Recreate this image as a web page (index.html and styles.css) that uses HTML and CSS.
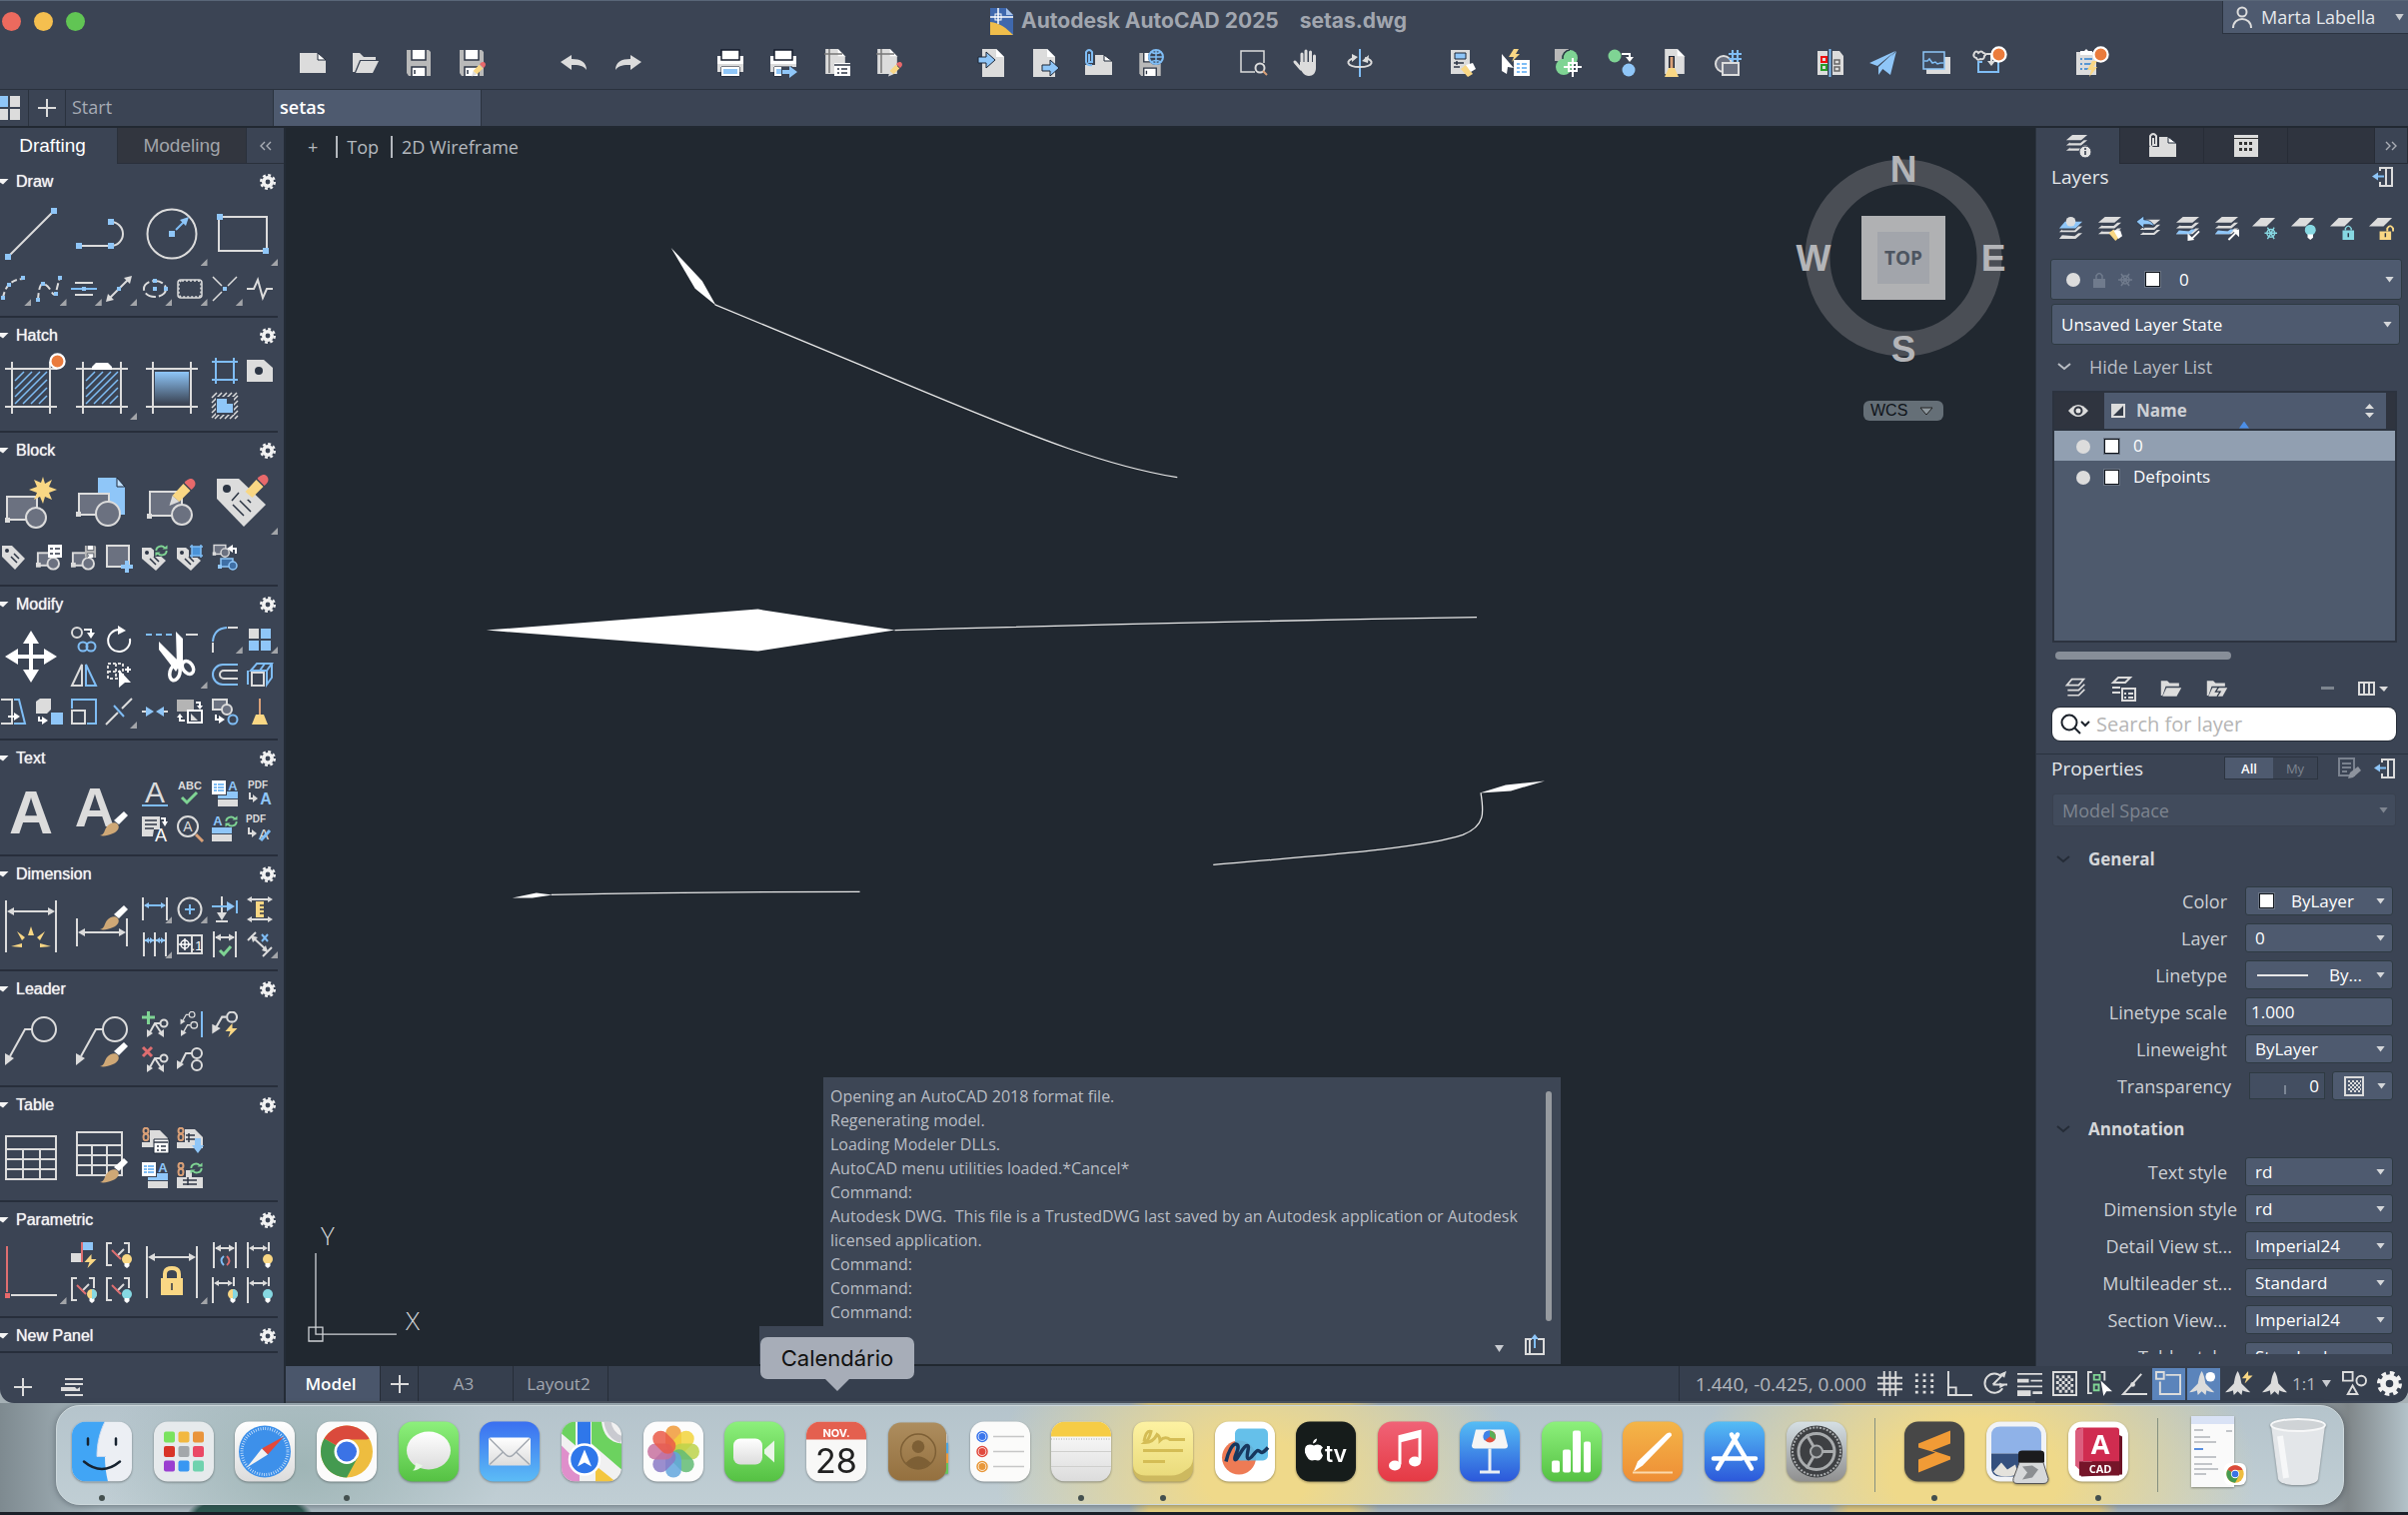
FILE: index.html
```html
<!DOCTYPE html>
<html lang="en">
<head>
<meta charset="utf-8">
<title>Autodesk AutoCAD 2025 - setas.dwg</title>
<link rel="stylesheet" href="styles.css">
</head>
<body>
<svg class="defs" aria-hidden="true">
  <defs>
    <linearGradient id="gHatch" x1="0" y1="0" x2="0" y2="1"><stop offset="0" stop-color="#8fc6f8"/><stop offset="1" stop-color="#3b4454"/></linearGradient>
    <linearGradient id="gGreen" x1="0" y1="0" x2="0" y2="1"><stop offset="0" stop-color="#8df07c"/><stop offset="1" stop-color="#55c143"/></linearGradient>
    <linearGradient id="gBlue" x1="0" y1="0" x2="0" y2="1"><stop offset="0" stop-color="#3a6ff0"/><stop offset="1" stop-color="#5cbcf6"/></linearGradient>
    <linearGradient id="gSky" x1="0" y1="0" x2="0" y2="1"><stop offset="0" stop-color="#55bdf5"/><stop offset="1" stop-color="#2c58da"/></linearGradient>
    <linearGradient id="gRed" x1="0" y1="0" x2="0" y2="1"><stop offset="0" stop-color="#f06377"/><stop offset="1" stop-color="#e53a44"/></linearGradient>
    <linearGradient id="gOrange" x1="0" y1="0" x2="0" y2="1"><stop offset="0" stop-color="#f4b548"/><stop offset="1" stop-color="#ee8e36"/></linearGradient>
    <linearGradient id="gWhite" x1="0" y1="0" x2="0" y2="1"><stop offset="0" stop-color="#fff"/><stop offset="1" stop-color="#dcdcdc"/></linearGradient>
    <linearGradient id="gGrey" x1="0" y1="0" x2="0" y2="1"><stop offset="0" stop-color="#d5dfe4"/><stop offset="1" stop-color="#8f8f8f"/></linearGradient>
    <linearGradient id="gPaper" x1="0" y1="0" x2="0" y2="1"><stop offset="0" stop-color="#fdf2a2"/><stop offset="1" stop-color="#eadb7c"/></linearGradient>
    <linearGradient id="gTan" x1="0" y1="0" x2="0" y2="1"><stop offset="0" stop-color="#ad8d5e"/><stop offset="1" stop-color="#94703f"/></linearGradient>
    <clipPath id="tile"><rect width="60" height="60" rx="14"/></clipPath>
  </defs>
  <symbol id="gear" viewBox="0 0 16 16"><circle cx="8" cy="8" r="4.2" fill="none" stroke="#f2f2f2" stroke-width="3.6"/><circle cx="8" cy="8" r="6.8" fill="none" stroke="#f2f2f2" stroke-width="2.4" stroke-dasharray="2.9 2.44"/></symbol>
  <symbol id="brush" viewBox="0 0 28 26"><path class="w" d="M14 9 24 0l4 4-9 9z"/><path class="t" d="M0 24c5-1 4-5 7-9s9-5 11-2 0 7-5 9-9 3-13 2z"/></symbol>
  <symbol id="pencil" viewBox="0 0 26 28"><path class="g" d="M0 27l3-10 7 6z"/><path class="y" d="M3 17 14 5l7 7-11 11z"/><path class="r" d="M15 4c4-5 8-5 10-2s1 6-3 9z"/></symbol>
  <symbol id="rot" viewBox="0 0 14 12"><path class="ln" d="M1.5 6a5 4.500 0 0 1 9-3M12.500 6a5 4.500 0 0 1-9 3"/><path class="n" d="M8 4.500h5.500V0zM6 7.500H.5V12z"/></symbol>
  <symbol id="spot" viewBox="0 0 18 18"><circle cx="9" cy="9" r="7.500" fill="#ea7b3c" stroke="#fff" stroke-width="2.400"/></symbol>
  <symbol id="block" viewBox="0 0 26 20"><rect x="3" y="2" width="17" height="13" class="bk"/><circle cx="19" cy="13" r="6" class="bk"/><path class="g" d="M1 12h5v5H1z"/></symbol>
  <symbol id="leader" viewBox="0 0 52 52"><circle cx="39" cy="14" r="12" class="lg"/><path class="lg" d="M27 14h-7L5 41"/><path class="g" d="M0 50V38l9 5z"/></symbol>
  <symbol id="lead-s" viewBox="0 0 18 17"><circle cx="14" cy="4" r="3.500" class="lg thin"/><path class="lg thin" d="M10 4H7L3 11"/><path class="g" d="M0 16V9l6 3z"/></symbol>
  <symbol id="bulb" viewBox="0 0 10 14"><circle cx="5" cy="5" r="5"/><path class="w" d="M2.500 9h5v3L5 14l-2.500-2z"/></symbol>
  <symbol id="link" viewBox="0 0 8 14"><ellipse cx="4" cy="3.500" rx="2.500" ry="2.800" class="lt"/><ellipse cx="4" cy="10" rx="2.500" ry="3.200" class="lt"/></symbol>
  <symbol id="dimw" viewBox="0 0 26 26"><path class="lg" d="M2 0v26M24 0v26M4 6h18"/><path class="g" d="M3 6l6-3.500v7zM23 6l-6-3.500v7z"/></symbol>
  <symbol id="cons" viewBox="0 0 26 26"><path class="lg" d="M6 1H1v22h5M18 1h5v10"/><path class="lg" d="m11 14 7-7"/><path class="lr" d="M6 8l9 9"/></symbol>
  <symbol id="layers" viewBox="0 0 26 26"><path class="g" d="M8 1h17l-7 6H1zM6 9l-5 4h17l7-6h-4l-4 3.500H5zM6 15l-5 4h17l7-6h-4l-4 3.500H5z"/></symbol>
  <symbol id="sheet" viewBox="0 0 26 26"><path class="g" d="M10 2h15l-9 9H1z"/></symbol>
  <symbol id="page" viewBox="0 0 24 28"><path class="g" d="M1 0h14l8 8v20H1z"/><path class="w" d="M15 0l8 8h-8z"/></symbol>
  <symbol id="chrome" viewBox="0 0 60 60"><circle cx="30" cy="30" r="26" fill="#eebd3f"/><path d="M30 30 7.500 17A26 26 0 0 1 52.500 17z" fill="#da4a3c"/><path d="M30 30 7.500 17A26 26 0 0 0 30 56L41 36z" fill="#449a50"/><path d="M30 18h22.500L41 36z" fill="#eebd3f"/><circle cx="30" cy="30" r="12.500" fill="#fff"/><circle cx="30" cy="30" r="10" fill="#3b73e6"/></symbol>
  <symbol id="star" viewBox="0 0 26 26"><path class="g" d="M13 0c3 5 3 9 4 13l9 9c-4 0-6-1-8-2l-1 5-4-4-4 4-1-5c-2 1-4 2-8 2l9-9c1-4 1-8 4-13z"/></symbol>
  <symbol id="bolt" viewBox="0 0 12 14"><path class="y" d="M7 0 0 8h5l-2 6 9-9H7z"/></symbol>
  <symbol id="dock-in" viewBox="0 0 22 22"><path class="lg" d="M8 5V2h12v18H8v-4M14 2v18"/><path class="lb" d="M3 10.500h9"/><path class="b" d="M0 10.500l6-4v8z"/></symbol>
  <symbol id="printer" viewBox="0 0 28 28"><path class="g" d="M1 10h26v13H1z"/><path class="w" d="M1 7h26v8H1z"/><path d="M5 1h18v10H5z" fill="#fff" stroke="#141b2b" stroke-width="1.500"/><path d="M5 18h18v9H5z" fill="#8fc6f8" stroke="#141b2b"/><path d="M6 19h16v7H6z" fill="none" stroke="#fff" stroke-width="2"/></symbol>
  <symbol id="floppy" viewBox="0 0 28 28"><path d="M2 1h22l2 2v24H4l-2-3z" fill="#b9b9b9"/><path class="w" d="M7 1h14v10H7zM7 18h14v9H7z"/><path class="lk" d="M7 1v10h14V1M7 27v-9h14v9M10 21v4"/></symbol>
</svg>

<main class="window">
  <header class="titlebar">
    <div class="lights"><span class="light red"></span><span class="light amber"></span><span class="light green"></span></div>
    <h1 class="title">
      <svg width="24" height="27" viewBox="0 0 24 27"><path d="M0 0h16l7 7v20H0z" fill="#3f68ad"/><path d="M16 0v7h7z" fill="#a9c4ea"/><path d="M0 27V14c10 1 16 6 23 13z" fill="#efbd4b"/><path d="M0 9h23M8 0v16" stroke="#fff" stroke-width="1.500"/><rect x="5" y="6" width="6" height="6" fill="none" stroke="#fff"/></svg>
      <span>Autodesk AutoCAD 2025</span><span class="file">setas.dwg</span>
    </h1>
    <button class="user"><svg width="22" height="22" viewBox="0 0 22 22"><circle cx="11" cy="6" r="4.500" class="lg"/><path class="lg" d="M2 22c0-12 18-12 18 0"/></svg><span>Marta Labella</span><i class="down"></i></button>
  </header>

  <nav class="toolbar" aria-label="Main">
    <div class="tgroup">
      <button aria-label="New"><svg viewBox="0 0 28 28"><path class="g" d="M1 4h18l8 7v13H1z"/><path d="M19 4v7h8z" fill="#fff" stroke="#1d2636"/></svg></button>
      <button aria-label="Open"><svg viewBox="0 0 28 28"><path class="g" d="M1 4h7l4 4h12v3H8L3 23H1z"/><path class="g" d="M9 12h18l-6 12H4z"/></svg></button>
      <button aria-label="Save"><svg viewBox="0 0 28 28"><use href="#floppy"/></svg></button>
      <button aria-label="Save as"><svg viewBox="0 0 28 28"><use href="#floppy"/><use href="#pencil" x="14" y="13" width="14" height="15"/></svg></button>
    </div>
    <div class="tgroup">
      <button aria-label="Undo"><svg viewBox="0 0 28 28"><path class="g" d="M0 13 11 6v4c9 0 15 3 15 11-4-5-8-5-15-5v5z"/></svg></button>
      <button aria-label="Redo"><svg viewBox="0 0 28 28"><path class="g" d="M28 13 17 6v4C8 10 2 13 2 21c4-5 8-5 15-5v5z"/></svg></button>
    </div>
    <div class="tgroup">
      <button aria-label="Print"><svg viewBox="0 0 28 28"><use href="#printer"/></svg></button>
      <button aria-label="Publish"><svg viewBox="0 0 28 28"><use href="#printer"/><path d="M12 18h16v10H12z" fill="#3b4454"/><path class="b" d="M13 21h7v-4l8 6-8 6v-4h-7z"/></svg></button>
      <button aria-label="Page setup"><svg viewBox="0 0 28 28"><use href="#page" x="2" width="22" height="25"/><path d="M7 0v24M2 5h18" stroke="#777" stroke-width="1.500"/><path class="w" d="M12 14h16v13H12z"/><path class="lk" d="M12 16h16M15 20h2M19 20h6M15 24h2M19 24h6"/></svg></button>
      <button aria-label="Page edit"><svg viewBox="0 0 28 28"><use href="#page" x="1" width="22" height="25"/><path d="M6 0v24M1 5h18" stroke="#777" stroke-width="1.500"/><use href="#pencil" x="13" y="13" width="14" height="15"/></svg></button>
    </div>
    <div class="tgroup">
      <button aria-label="Import"><svg viewBox="0 0 28 28"><use href="#page" x="3" width="24" height="28"/><path d="M0 8h8V3l9 8-9 8v-5H0z" fill="#8fc6f8" stroke="#1d2636"/></svg></button>
      <button aria-label="Export"><svg viewBox="0 0 28 28"><use href="#page" x="1" width="24" height="28"/><path d="M11 16h8v-5l9 8-9 8v-5h-8z" fill="#8fc6f8" stroke="#1d2636"/></svg></button>
      <button aria-label="Attach"><svg viewBox="0 0 28 28"><path class="g" d="M1 16h10V6h9l8 6v14H1z"/><path d="M20 6v6h8z" fill="#fff" stroke="#1d2636"/><path class="lb" d="M5 5v8h3V3Q5-1 2 3v10q1 4 6 3"/></svg></button>
      <button aria-label="Save to web"><svg viewBox="0 0 28 28"><use href="#floppy" y="3" width="26" height="25"/><circle cx="19" cy="8" r="8" fill="#3b4454"/><circle cx="19" cy="8" r="7" class="lb"/><path class="lb thin" d="M12 8h14M19 1v14M14 3q5 3 10 0M14 13q5-3 10 0"/></svg></button>
    </div>
    <div class="tgroup">
      <button aria-label="Zoom window"><svg viewBox="0 0 28 28"><path class="lg thin" d="M15 23H1V2h23v12"/><circle cx="20" cy="19" r="4.500" class="lg"/><path class="lt" d="m23 22 4 4"/></svg></button>
      <button aria-label="Pan"><svg viewBox="0 0 28 28"><path class="lg thick" stroke-linecap="round" d="M9 17V5M13 15V2M17.500 15V3M21.500 17V7M8 20 2 13"/><path class="g" d="M7 13h16v6c0 5-3 8-7 8-5 0-7-4-9-8z"/></svg></button>
      <button aria-label="Orbit"><svg viewBox="0 0 28 28"><path class="lb" d="M14 0v28"/><path class="lg" d="M9 9c-10 2-9 9 5 9s15-7 5-9"/><path class="g" d="M16 12l7-6-1 8zM12 8l-6-3v8z"/></svg></button>
    </div>
    <div class="tgroup">
      <button aria-label="Match properties"><svg viewBox="0 0 28 28"><path class="g" d="M2 1h19v24H2z"/><path d="M6 4h11v6H6z" fill="#8fc6f8" stroke="#1d2636"/><path class="lk" d="M5 14h10M5 18h6M8 12v4"/><path class="y" d="m12 20 5-4 7 9-5 3z"/><path class="w" d="m17 16 7-2 3 6-5 3z"/></svg></button>
      <button aria-label="Quick select"><svg viewBox="0 0 28 28"><path class="w" d="M0 5l12 14-6-1-1 7-5-3z"/><path class="y" d="M12 0 7 8h5l-2 5 8-8h-4l3-5z"/><path class="w" d="M12 11h16v16H12z"/><path class="lb" d="M15 15h3M20 15h5M15 19h3M20 19h5M15 23h3M20 23h5"/></svg></button>
      <button aria-label="Quick calc"><svg viewBox="0 0 28 28"><path d="M0 0h14v12H0z" fill="#b9b9b9"/><circle cx="15" cy="9" r="8" class="n"/><circle cx="9" cy="18" r="8" class="n"/><path class="lk" d="M15 1a8 8 0 0 0-7 9"/><path class="lw" d="M18 9v19M9 18h18"/><rect x="14" y="14" width="8" height="8" class="lw"/></svg></button>
      <button aria-label="Compare points"><svg viewBox="0 0 28 28"><circle cx="7" cy="7" r="6.500" class="n"/><circle cx="21" cy="21" r="6.500" class="b"/><path class="lw" d="M14 5h8v4"/><path class="w" d="M18 8h8l-4 5z"/></svg></button>
      <button aria-label="Purge"><svg viewBox="0 0 28 28"><use href="#page" x="3" width="22" height="25"/><path d="M11 7v13" stroke="#1d2636" stroke-width="6"/><path class="lt thick" d="M11 8v12"/><path class="y" d="M8 19h6l4 9H4z"/></svg></button>
      <button aria-label="Count"><svg viewBox="0 0 28 28"><circle cx="10" cy="15" r="8" class="bk"/><rect x="9" y="14" width="16" height="12" class="bk"/><path class="lb" d="M19 1v12M24 1v12M15 5h13M15 10h13"/></svg></button>
    </div>
    <div class="tgroup">
      <button aria-label="Drawing compare"><svg viewBox="0 0 28 28"><path class="g" d="M1 2h10v24H1zM16 2h7l4 5v19H16z"/><rect x="5" y="8" width="5" height="5" fill="none" stroke="#e11" stroke-width="2"/><rect x="5" y="16" width="5" height="5" fill="none" stroke="#2a9b2a" stroke-width="2"/><path d="M18 11h5v4h-5zM18 18h5v4h-5z" fill="none" stroke="#666" stroke-width="1.500"/><path class="lb" d="M13.500 0v28"/></svg></button>
      <button aria-label="Share"><svg viewBox="0 0 28 28"><path class="b" d="M0 14 26 2 8 17zM26 2 9 18v8zM27 2 12 19l9 7z"/></svg></button>
      <button aria-label="Trace"><svg viewBox="0 0 28 28"><path class="g" d="M4 8h24v17H4z"/><path d="M1 3h21v17H1z" fill="#3f4b5e" stroke="#8fc6f8" stroke-width="1.500"/><path class="lb thin" d="M2 12h3l2-2 3 4 3-1 2 2 3-1h3"/></svg></button>
      <button aria-label="Markup import"><svg viewBox="0 0 34 28"><path class="lb" d="M6 12v11h20V12h-4M6 13h4"/><path class="lg" d="M2 4q2-3 4 0 3-3 5 0 4 1 1 3 0 4-4 3-3 2-4-1-4-1-2-5zM14 5h5v8"/><path class="g" d="M15 12h8l-4 5z"/><use href="#spot" x="18" y="-3" width="17" height="17"/></svg></button>
    </div>
    <div class="tgroup">
      <button aria-label="Activity insights"><svg viewBox="0 0 34 28"><path class="g" d="M1 3h20v23H1z"/><path class="w" d="M5 2h4l2-2 2 2h4v4H5z"/><path d="M5 10h2M9 10h8M5 15h2M9 15h8M5 20h2M9 20h5" stroke="#2b7fd0" stroke-width="1.500"/><path class="y" d="m17 12-5 9h4l-2 7 8-10h-4l4-6z"/><use href="#spot" x="17" y="-3" width="17" height="17"/></svg></button>
    </div>
  </nav>

  <nav class="filetabs" aria-label="Files">
    <button class="grid" aria-label="Overview"><svg width="20" height="24" viewBox="0 0 20 24"><path class="b" d="M0 0h8v11H0z"/><path class="g" d="M10 0h10v11H10zM0 13h8v11H0zM10 13h10v11H10z"/></svg></button>
    <button class="plus" aria-label="New tab"><svg width="20" height="20" viewBox="0 0 20 20"><path class="lg" d="M10 1v18M1 10h18"/></svg></button>
    <a class="ftab" href="#start">Start</a><a class="ftab on" href="#setas">setas</a>
  </nav>

  <div class="work">
    <aside class="palette">
      <div class="ptabs"><button class="ptab on">Drafting</button><button class="ptab">Modeling</button><button class="fold" aria-label="Collapse"><svg width="12" height="10" viewBox="0 0 12 10"><path d="M5 1 1 5l4 4M11 1 7 5l4 4" fill="none" stroke="#a9adb5" stroke-width="1.400"/></svg></button></div>

      <section class="panel tall"><h2><i></i>Draw<svg class="cog"><use href="#gear"/></svg></h2>
        <div class="tools">
          <button class="big"><svg viewBox="0 0 52 52"><path class="lg" d="M3 49 49 3"/><path class="b" d="M0 46h6v6H0zM46 0h6v6h-6z"/></svg></button>
          <button class="big"><svg viewBox="0 0 52 52"><path class="lg" d="M3 38h32a12 12 0 0 0 0-24"/><path class="b" d="M0 35h6v6H0zM32 35h6v6h-6zM32 11h6v6h-6z"/></svg></button>
          <button class="big more"><svg viewBox="0 0 52 52"><circle cx="26" cy="26" r="24.500" class="lg"/><path class="lb" d="m30 22 9-9"/><path class="b" d="M23 23h6v6h-6zM43 9l-9 3 6 6z"/></svg></button>
          <button class="big more"><svg viewBox="0 0 52 52"><path class="lg" d="M2 9h48v34H2z"/><path class="b" d="M0 6h6v6H0zM46 40h6v6h-6z"/></svg></button>
          <button class="more"><svg viewBox="0 0 26 26"><path class="lg" stroke-dasharray="6 3" d="M2 22Q5 4 22 3"/><path class="b" d="M0 20h4v4H0zM6 7h4v4H6zM20 0h4v4h-4z"/></svg></button>
          <button class="more"><svg viewBox="0 0 26 26"><path class="lg" stroke-dasharray="7 3" d="M2 24Q3 8 7 8t8 7 5 2 4-16"/><path class="b" d="M0 22h4v4H0zM5 6h4v4H5zM18 16h4v4h-4zM22 0h4v4h-4z"/></svg></button>
          <button class="more"><svg viewBox="0 0 26 26"><path class="lg" d="M4 7h18M4 19h18"/><path class="lb" d="M0 13h26"/><path class="b" d="M11 11h4v4h-4z"/></svg></button>
          <button class="more"><svg viewBox="0 0 26 26"><path class="lg" d="M3 23 23 3"/><path class="g" d="M26 0l-8 2 6 6zM0 26l8-2-6-6z"/><path class="b" d="M11 11h4v4h-4z"/></svg></button>
          <button class="more"><svg viewBox="0 0 26 26"><ellipse cx="13" cy="13" rx="11" ry="8" class="lg" stroke-dasharray="11 3"/><path class="b" d="M11 3h4v4h-4zM11 11h4v4h-4zM22 11h4v4h-4z"/></svg></button>
          <button class="more"><svg viewBox="0 0 26 26"><rect x="1" y="4" width="24" height="18" rx="3" class="lg thin"/><rect x="2" y="5" width="22" height="16" rx="3" class="lg thin" stroke-dasharray="2 2"/></svg></button>
          <button class="more"><svg viewBox="0 0 26 26"><path class="lg thin" d="m1 1 9 9M25 1l-9 9M1 25l9-9"/><path class="b" d="M11 11h4v4h-4z"/></svg></button>
          <button><svg viewBox="0 0 26 26"><path class="lg" d="M0 13h7l4-9 5 18 4-9h6"/></svg></button>
        </div>
      </section>

      <section class="panel"><h2><i></i>Hatch<svg class="cog"><use href="#gear"/></svg></h2>
        <div class="tools">
          <button class="big"><svg viewBox="0 0 52 52"><path class="lg" d="M7 0v52M45 0v52M0 7h52M0 45h52"/><path class="lb thin" d="M10 19 19 10M10 27l17-17M10 35l25-25M10 42l32-32M18 42l24-24M26 42l16-16M34 42l8-8"/><use href="#spot" x="44" y="-9" width="17" height="17"/></svg></button>
          <button class="big more"><svg viewBox="0 0 52 52"><path class="lg" d="M7 0v52M45 0v52M0 7h52M0 45h52"/><path class="lb thin" d="M10 19 19 10M10 27l17-17M10 35l25-25M10 42l32-32M18 42l24-24M26 42l16-16M34 42l8-8"/><path class="w" d="M16 8v-3l4-4h12l4 4v3z"/></svg></button>
          <button class="big"><svg viewBox="0 0 52 52"><path class="lg" d="M7 0v52M45 0v52M0 7h52M0 45h52"/><path d="M9 10h34v32H9z" fill="url(#gHatch)"/></svg></button>
          <button><svg viewBox="0 0 26 26"><path class="lb" d="M4 0v26M22 0v26M0 4h26M0 22h26"/></svg></button>
          <button><svg viewBox="0 0 26 26"><path class="g" d="M0 2h17l9 8v14H0z"/><circle cx="12" cy="13" r="4" fill="#2c3544"/></svg></button>
          <button><svg viewBox="0 0 26 26"><path d="M0 5 5 0M0 10 10 0M0 15 15 0M0 20 20 0M0 25 25 0M3 26 26 3M8 26 26 8M13 26l13-13M18 26l8-8M23 26l3-3" class="lg thin"/><path d="M4 4h18v18H4z" fill="#3b4454"/><path class="b" d="M5 6h10v5h6v9H5z"/></svg></button>
        </div>
      </section>

      <section class="panel tall"><h2><i></i>Block<svg class="cog"><use href="#gear"/></svg></h2>
        <div class="tools">
          <button class="big"><svg viewBox="0 0 52 52"><rect x="2" y="20" width="30" height="23" class="bk"/><path class="g" d="M0 41h5v5H0z"/><circle cx="31" cy="41" r="10" class="bk"/><path class="y" d="m38 0 2 7 7-4-3 7 8 3-8 3 3 7-7-3-2 7-3-7-6 3 3-7-8-3 8-3-3-7 7 3z"/></svg></button>
          <button class="big"><svg viewBox="0 0 52 52"><path class="b" d="M22 1h19l8 9v28H22z"/><path d="M41 1v9h8z" fill="#bfe0ff" stroke="#1d2636"/><rect x="3" y="17" width="30" height="21" class="bk"/><path class="g" d="M0 35h5v5H0z"/><circle cx="32" cy="37" r="12" class="bk"/></svg></button>
          <button class="big"><svg viewBox="0 0 52 52"><rect x="4" y="15" width="32" height="24" class="bk"/><path class="g" d="M1 37h5v5H1z"/><circle cx="36" cy="38" r="10" class="bk"/><use href="#pencil" x="23" y="2" width="27" height="28"/></svg></button>
          <button class="big more"><svg viewBox="0 0 52 52"><path class="g" d="M0 2h22l27 26-22 22L0 22z"/><circle cx="10" cy="12" r="4" fill="#2c3544"/><path class="lk" d="M15 24l7-8M16 28l11 11M23 24l11 11M28 20l6 6"/><use href="#pencil" x="25" y="-2" width="27" height="28"/></svg></button>
          <button><svg viewBox="0 0 26 26"><path class="g" d="M1 1h10l13 13-10 11L1 12z"/><circle cx="6" cy="6" r="2" fill="#2c3544"/><path class="lk" d="M10 12l6 6M13 9l5 5"/></svg></button>
          <button><svg viewBox="0 0 26 26"><use href="#block" x="-1" y="6" width="25" height="20"/><path class="w" d="M12 0h14v13H12z"/><path class="lk" d="M14 4h3M19 4h5M14 9h3M19 9h5"/></svg></button>
          <button><svg viewBox="0 0 26 26"><use href="#block" x="-1" y="6" width="25" height="20"/><use href="#floppy" x="13" y="0" width="13" height="14"/></svg></button>
          <button><svg viewBox="0 0 26 26"><rect x="1" y="1" width="22" height="21" class="bk"/><path d="M19 16h4v4h4v4h-4v4h-4v-4h-4v-4h4z" class="b"/></svg></button>
          <button><svg viewBox="0 0 26 26"><path class="g" d="M0 3h9l15 13-10 10L0 14z"/><circle cx="5" cy="8" r="2" fill="#2c3544"/><path class="lk" d="M8 14l6 6M12 12l5 5"/><path d="M12 0h14v12H12z" fill="#3b4454"/><use href="#rot" x="13" y="0" width="13" height="12"/></svg></button>
          <button><svg viewBox="0 0 26 26"><path class="g" d="M0 3h9l15 13-10 10L0 14z"/><circle cx="5" cy="8" r="2" fill="#2c3544"/><path class="lk" d="M8 14l6 6M12 12l5 5"/><path d="M12 0h14v13H12z" fill="#3b4454"/><path d="M15 2h9v9h-9z" fill="#4a93d8"/><path class="lb thin" d="M15 0v13M24 0v13M13 2h13M13 11h13"/></svg></button>
          <button><svg viewBox="0 0 26 26"><use href="#block" x="0" y="-1" width="18" height="14"/><path class="lw" d="M24 9V4h-5"/><path class="w" d="M15 4l6-4v8z"/><rect x="9" y="14" width="12" height="8" fill="#3f6fa5" stroke="#8fc6f8" stroke-width="1.500"/><circle cx="21" cy="21" r="4" fill="#3f6fa5" stroke="#8fc6f8" stroke-width="1.500"/><path class="b" d="M6 20h4v4H6z"/></svg></button>
        </div>
      </section>

      <section class="panel tall"><h2><i></i>Modify<svg class="cog"><use href="#gear"/></svg></h2>
        <div class="tools">
          <button class="big"><svg viewBox="0 0 52 52"><path class="w" d="m26 0 8 13h-6v11h11v-6l13 8-13 8v-6H28v11h6l-8 13-8-13h6V28H13v6L0 26l13-8v6h11V13h-6z"/></svg></button>
          <button><svg viewBox="0 0 26 26"><circle cx="6" cy="6" r="5" class="lg"/><path class="lw" d="M13 3h7v5"/><path class="w" d="M16 6h8l-4 6z"/><circle cx="12" cy="20" r="4.500" class="lb"/><circle cx="20" cy="20" r="4.500" class="lb"/></svg></button>
          <button><svg viewBox="0 0 26 26"><path class="lw" d="M14 3a11 11 0 1 0 10 9"/><path class="w" d="M12-1l8 5-8 4z"/></svg></button>
          <button class="big more"><svg viewBox="0 0 52 52"><path class="lb" d="M0 4h28" stroke-dasharray="6 4"/><path class="lg" d="M40 4h12"/><path class="w" d="M30 1l7 7v28h-6zM13 11l22 22-5 8L13 19z"/><ellipse cx="29" cy="42" rx="5" ry="8" fill="none" stroke="#fff" stroke-width="3.500" transform="rotate(14 29 42)"/><ellipse cx="42" cy="37" rx="5" ry="7" fill="none" stroke="#fff" stroke-width="3.500" transform="rotate(-35 42 37)"/></svg></button>
          <button class="more"><svg viewBox="0 0 26 26"><path class="lb" d="M1 15Q2 2 15 1"/><path class="lg" d="M16 1h10M1 16v10"/></svg></button>
          <button class="more"><svg viewBox="0 0 26 26"><path class="g" d="M2 2h10v10H2z"/><path class="b" d="M14 2h10v10H14zM2 14h10v10H2zM14 14h10v10H14z"/></svg></button>
          <button><svg viewBox="0 0 26 26"><path class="lg" d="M11 3v21H1z"/><path class="lb" d="M15 3v21h10z"/></svg></button>
          <button><svg viewBox="0 0 26 26"><path class="lg" stroke-dasharray="3 2" d="M2 2h15v15H2zM2 10h15M10 2v15"/><path class="w" d="m13 8 12 13-6 0-6 5z"/><path class="lw" d="M19 8h6M22 5v6"/></svg></button>
          <button><svg viewBox="0 0 26 26"><path class="lb" d="M26 3H11a10 10 0 0 0 0 20h15"/><path class="lg" d="M26 9H12a4 4 0 0 0 0 8h14"/></svg></button>
          <button><svg viewBox="0 0 26 26"><path class="lb" d="M4 9 10 2h15L20 9zM25 2v14l-5 7V9M13 9l5-7M1 9v14"/><rect x="5" y="11" width="12" height="13" class="lg"/></svg></button>
          <button><svg viewBox="0 0 26 26"><path class="lg" d="M0 1h11v24H0"/><path class="lb" d="M13 1h5l6 24H13"/><path class="lw" d="M7 18h8"/><path class="w" d="m13 14 6 4-6 4z"/></svg></button>
          <button><svg viewBox="0 0 26 26"><path class="g" d="M0 3 4 0h11v11l-4 4H0z"/><path class="b" d="M15 14h12v12H15z"/><path class="lw" d="M3 18v4h4"/><path class="w" d="m6 18 6 4-6 4z"/></svg></button>
          <button><svg viewBox="0 0 26 26"><path class="lb" d="M1 10V1h24v24H16"/><rect x="1" y="12" width="13" height="13" class="lg"/></svg></button>
          <button class="more"><svg viewBox="0 0 26 26"><path class="lg" d="M0 26 12 14M16 10 26 0"/><path class="lb" d="m8 7 10 11"/></svg></button>
          <button><svg viewBox="0 0 26 26"><path class="lg" d="M0 13h5M21 13h5"/><path class="b" d="M4 8v10l8-5zM22 8v10l-8-5z"/></svg></button>
          <button><svg viewBox="0 0 26 26"><path d="M0 1h17v12H0z" fill="#b4b4b4"/><rect x="11" y="12" width="14" height="12" fill="#3b4454" stroke="#fff" stroke-width="2"/><path class="g" d="M14 15l7 7h-7z"/><path class="lw" d="M19 4h4v4M3 17v5h5"/><path class="w" d="M20 7h6l-3 4zM0 19h6l-3-4z"/></svg></button>
          <button><svg viewBox="0 0 26 26"><rect x="1" y="1" width="14" height="10" class="bk"/><circle cx="15" cy="11" r="5" class="bk"/><path class="lw" d="M4 16v5h4"/><path class="w" d="m7 17 6 4-6 4z"/><circle cx="21" cy="21" r="4.500" class="lb"/></svg></button>
          <button><svg viewBox="0 0 26 26"><path class="lt" d="M13 0v17"/><path class="y" d="M9 16h8l4 10H5z"/></svg></button>
        </div>
      </section>

      <section class="panel"><h2><i></i>Text<svg class="cog"><use href="#gear"/></svg></h2>
        <div class="tools">
          <button class="big"><svg viewBox="0 0 52 52"><text class="glyph" x="26" y="49" font-size="61">A</text></svg></button>
          <button class="big"><svg viewBox="0 0 52 52"><text class="glyph" x="19" y="42" font-size="56">A</text><use href="#brush" x="24" y="27" width="28" height="26"/></svg></button>
          <button><svg viewBox="0 0 26 26"><text class="glyph light" x="13" y="22" font-size="30">A</text><path class="lb" d="M0 25h26"/></svg></button>
          <button><svg viewBox="0 0 26 26"><text class="glyph" x="13" y="9" font-size="11">ABC</text><path class="ln thick" d="m5 17 5 5L20 12"/></svg></button>
          <button><svg viewBox="0 0 26 26"><path class="w" d="M0 0h14v14H0z"/><path class="lb" d="M2 4h3M6 4h6M2 7h3M6 7h6M2 10h3M6 10h6"/><text class="glyph blue" x="21" y="10" font-size="13">A</text><path class="b" d="M15 11h11v7H6v-3h9z"/><path class="g" d="M6 19h20v7H6z"/></svg></button>
          <button><svg viewBox="0 0 26 26"><text class="glyph" x="11" y="8" font-size="10">PDF</text><path class="lg" d="M3 12v6h4"/><path class="g" d="m6 14 5 4-5 4z"/><text class="glyph blue" x="19" y="24" font-size="16">A</text></svg></button>
          <button><svg viewBox="0 0 26 26"><path class="g" d="M0 1h18v20H0z"/><path class="lk" d="M3 5h12M3 9h12M3 13h9"/><path class="lw" d="M19 3h4v5"/><path class="w" d="M20 6h6l-3 5z"/><path d="M12 14h14v13H10z" fill="#3b4454"/><text class="glyph white" x="19" y="26" font-size="18">A</text></svg></button>
          <button><svg viewBox="0 0 26 26"><circle cx="11" cy="11" r="10" class="lg"/><text class="glyph light" x="11" y="16" font-size="14">A</text><path class="lt thick" d="m19 19 7 7"/></svg></button>
          <button><svg viewBox="0 0 26 26"><text class="glyph blue" x="6" y="10" font-size="13">A</text><use href="#rot" x="13" y="0" width="13" height="12"/><path class="b" d="M0 12h20v6H0z"/><path class="g" d="M0 19h20v7H0z"/></svg></button>
          <button><svg viewBox="0 0 26 26"><text class="glyph" x="9" y="7" font-size="10">PDF</text><path class="lg" d="M2 12v6h4"/><path class="g" d="m5 14 5 4-5 4z"/><text class="glyph light" x="17" y="24" font-size="15">A</text><path class="lb thick" d="m14 25 9-10"/></svg></button>
        </div>
      </section>

      <section class="panel"><h2><i></i>Dimension<svg class="cog"><use href="#gear"/></svg></h2>
        <div class="tools">
          <button class="big"><svg viewBox="0 0 52 52"><path class="lg" d="M1 0v52M51 0v52M4 11h44"/><path class="g" d="m2 11 7-4v8zM50 11l-7-4v8z"/><path class="y" d="m26 26 3 9h-6zM12 31l8 6-3 3zM40 31l-8 6 3 3zM6 46l11-3v4zM46 46l-11-3v4z"/></svg></button>
          <button class="big"><svg viewBox="0 0 52 52"><path class="lg" d="M1 18v28M51 18v28M4 32h44"/><path class="g" d="m2 32 7-4v8zM50 32l-7-4v8z"/><use href="#brush" x="24" y="5" width="28" height="26"/></svg></button>
          <button class="more"><svg viewBox="0 0 26 26"><path class="lg" d="M1 1v23M25 1v23"/><path class="lb" d="M3 9h20"/><path class="b" d="m2 9 5-3v6zM24 9l-5-3v6z"/></svg></button>
          <button class="more"><svg viewBox="0 0 26 26"><circle cx="13" cy="13" r="11.500" class="lg"/><path class="lb" d="M8 13h10M13 8v10"/></svg></button>
          <button><svg viewBox="0 0 26 26"><path class="lg" d="M10 0v18M4 25h12"/><path class="g" d="M5 16h10l-5 8z"/><path class="lb" d="M0 10h16M25 4v13"/><path class="b" d="m15 5 8 5-8 5z"/></svg></button>
          <button><svg viewBox="0 0 26 26"><path class="lg" d="M3 3h20M3 23h20"/><path class="g" d="m0 3 5-3v6zM26 3l-5-3v6zM0 23l5-3v6zM26 23l-5-3v6z"/><path class="y" d="M9 5h8v16H9z"/><path class="lk" d="M13 9h4M13 13h4M13 17h4"/></svg></button>
          <button class="more"><svg viewBox="0 0 26 26"><path class="lg" d="M2 1v24M13 1v24M24 1v24"/><path class="lb" d="M3 9h9M14 9h9"/><path class="b" d="m3 9 4-3v6zM12 9 8 6v6zM14 9l4-3v6zM23 9l-4-3v6z"/></svg></button>
          <button><svg viewBox="0 0 26 26"><path class="lg" d="M1 4h24v18H1zM15 4v18"/><circle cx="8" cy="13" r="4" class="lw thin"/><path class="lw thin" d="M2 13h12M8 7v12"/><text class="glyph white" x="20" y="19" font-size="13">.1</text></svg></button>
          <button><svg viewBox="0 0 26 26"><use href="#dimw" width="26" height="26"/><path class="ln thick" d="m8 19 4 4 7-8"/></svg></button>
          <button class="more"><svg viewBox="0 0 26 26"><path class="lg" d="m1 9 8-8M16 25l9-9M6 6l14 13"/><path class="g" d="m4 4 7 2-5 5zM21 21l-6-2 4-5z"/><path class="lb" d="m15 3 6 7M21 3l-6 7"/></svg></button>
        </div>
      </section>

      <section class="panel"><h2><i></i>Leader<svg class="cog"><use href="#gear"/></svg></h2>
        <div class="tools">
          <button class="big"><svg viewBox="0 0 52 52"><use href="#leader"/></svg></button>
          <button class="big"><svg viewBox="0 0 52 52"><use href="#leader"/><use href="#brush" x="24" y="27" width="28" height="26"/></svg></button>
          <button><svg viewBox="0 0 26 26"><path class="ln thick" d="M0 6h13M6.500 0v13"/><circle cx="22" cy="12" r="3.500" class="lg"/><path class="lg" d="M18 12h-5l-5 9M13 12l6 9"/><path class="g" d="M5 26v-8l6 4zM22 26v-8l-6 4z"/></svg></button>
          <button><svg viewBox="0 0 26 26"><path class="lb" d="M25 0v26"/><use href="#lead-s" x="0" y="0" width="22" height="14"/><use href="#lead-s" x="3" y="10" width="19" height="16"/></svg></button>
          <button><svg viewBox="0 0 26 26"><use href="#lead-s" width="26" height="24" y="0"/><use href="#bolt" x="13" y="12" width="13" height="14"/></svg></button>
          <span></span>
          <button><svg viewBox="0 0 26 26"><path class="lr thick" d="m1 1 9 9M10 1l-9 9"/><circle cx="22" cy="12" r="3.500" class="lg"/><path class="lg" d="M18 12h-5l-5 9M13 12l6 9"/><path class="g" d="M5 26v-8l6 4zM22 26v-8l-6 4z"/></svg></button>
          <button><svg viewBox="0 0 26 26"><circle cx="20" cy="7" r="5" class="lg"/><circle cx="20" cy="19" r="5" class="lg"/><path class="lg" d="M15 7h-6L3 19"/><path class="g" d="M0 23v-9l7 4z"/></svg></button>
        </div>
      </section>

      <section class="panel"><h2><i></i>Table<svg class="cog"><use href="#gear"/></svg></h2>
        <div class="tools">
          <button class="big"><svg viewBox="0 0 52 52"><path class="lg" d="M1 5h50v43H1zM1 18h50M1 28h50M1 38h50M18 18v30M35 18v30"/></svg></button>
          <button class="big"><svg viewBox="0 0 52 52"><path class="lg" d="M1 1h45v43H1zM1 14h45M1 24h45M1 34h45M16 14v30M31 14v30"/><use href="#brush" x="24" y="27" width="28" height="26"/></svg></button>
          <button><svg viewBox="0 0 26 26"><path class="g" d="M8 3h10l8 8v9H0v-5h8z"/><use href="#link" x="0" y="0" width="8" height="14"/><path d="M12 12h15v14H12z" fill="#fff" stroke="#1d2636"/><path class="lk" d="M12 15h14M15 19h2M19 19h5M15 23h2M19 23h5"/></svg></button>
          <button><svg viewBox="0 0 26 26"><path class="g" d="M8 2h10l8 8v11H0v-6h8z"/><path class="lk" d="M9 8h9M9 12h9M12 6v9"/><use href="#link" x="0" y="0" width="8" height="14"/><path class="b" d="M18 11h6v7h3l-6 8-6-8h3z"/></svg></button>
          <span></span><span></span>
          <button><svg viewBox="0 0 26 26"><path class="w" d="M0 0h14v14H0z"/><path class="lb" d="M2 4h3M6 4h6M2 7h3M6 7h6M2 10h3M6 10h6"/><text class="glyph blue" x="21" y="10" font-size="13">A</text><path class="b" d="M15 11h11v7H6v-3h9z"/><path class="g" d="M6 19h20v7H6z"/></svg></button>
          <button><svg viewBox="0 0 26 26"><path class="g" d="M0 15h26v11H0zM9 8h6v7H9z"/><path class="lk" d="M6 18h14M6 22h14M11 15v8"/><use href="#link" x="0" y="0" width="8" height="14"/><use href="#rot" x="13" y="0" width="13" height="12"/></svg></button>
        </div>
      </section>

      <section class="panel"><h2><i></i>Parametric<svg class="cog"><use href="#gear"/></svg></h2>
        <div class="tools">
          <button class="big more"><svg viewBox="0 0 52 52"><path class="lr" d="M2 0v46"/><path class="lg" d="M6 49h46"/><path class="r" d="M0 47h5v5H0z"/></svg></button>
          <button><svg viewBox="0 0 26 26"><path class="b" d="M11 0h11v8H11z"/><path class="g" d="M0 11h10v9H0z"/><path class="lr" d="M11 0v20"/><use href="#bolt" x="13" y="12" width="13" height="14"/></svg></button>
          <button><svg viewBox="0 0 26 26"><use href="#cons"/><use href="#bulb" class="y" x="16" y="12" width="10" height="14"/></svg></button>
          <button class="big more"><svg viewBox="0 0 52 52"><path class="lg" d="M1 0v52M51 0v52M4 11h44"/><path class="g" d="m2 11 7-4v8zM50 11l-7-4v8z"/><path class="y" d="M15 32h22v17H15z"/><path d="M19 32v-4q0-6 7-6t7 6v4" fill="none" stroke="#f9d784" stroke-width="4"/><path class="lk" d="M26 37v7"/></svg></button>
          <button><svg viewBox="0 0 26 26"><use href="#dimw"/><path d="M12 14q-5 4 0 9" class="lb"/><path class="lr" d="M15 23q5-4 0-9"/></svg></button>
          <button><svg viewBox="0 0 26 26"><path class="lg" d="M1 0v26M22 0v9M4 6h15"/><path class="g" d="m2 6 5-3v6zM21 6l-5-3v6z"/><use href="#bulb" class="y" x="16" y="12" width="10" height="14"/></svg></button>
          <button><svg viewBox="0 0 26 26"><use href="#cons"/><use href="#bulb" class="y" x="16" y="12" width="10" height="14"/><path class="c" d="M21 12a5 5 0 0 1 0 10z"/></svg></button>
          <button><svg viewBox="0 0 26 26"><use href="#cons"/><use href="#bulb" class="c" x="16" y="12" width="10" height="14"/></svg></button>
          <button><svg viewBox="0 0 26 26"><path class="lg" d="M1 0v26M22 0v9M4 6h15"/><path class="g" d="m2 6 5-3v6zM21 6l-5-3v6z"/><use href="#bulb" class="y" x="16" y="12" width="10" height="14"/><path class="c" d="M21 12a5 5 0 0 1 0 10z"/></svg></button>
          <button><svg viewBox="0 0 26 26"><path class="lg" d="M1 0v26M22 0v9M4 6h15"/><path class="g" d="m2 6 5-3v6zM21 6l-5-3v6z"/><use href="#bulb" class="c" x="16" y="12" width="10" height="14"/></svg></button>
        </div>
      </section>

      <section class="panel short"><h2><i></i>New Panel<svg class="cog"><use href="#gear"/></svg></h2></section>
      <div class="pfoot">
        <button aria-label="Add panel"><svg width="20" height="20" viewBox="0 0 20 20"><path class="lg" d="M10 1v18M1 10h18"/></svg></button>
        <button aria-label="Panel list"><svg width="22" height="20" viewBox="0 0 22 20"><path class="lg" d="M4 2h18M4 7h18M4 18h18"/><path class="g" d="M0 10h14l2 2 3-2v4H0z"/></svg></button>
      </div>
    </aside>

    <div class="center">
      <div class="canvas">
        <div class="viewlabel"><button>+</button><button>Top</button><button>2D Wireframe</button></div>
        <svg class="drawing" viewBox="286 127 1752 1240" preserveAspectRatio="xMinYMin meet">
          <g fill="none" stroke="#e8e8e8" stroke-width="1.300">
            <path d="M716 304 861 364Q1010 427 1070 448T1179 477"/>
            <path d="M896 630Q1180 622 1479 617"/>
            <path d="M1483 793C1486 812 1488 826 1465 835C1420 850 1300 857 1215 865"/>
            <path d="M552 895Q700 892 861 892"/>
          </g>
          <g fill="#fff"><path d="m672 247 31 33 14 25-21-17z"/><path d="m487 630 272-21 137 21-137 21z"/><path d="m1482 793 26-8 39-4-34 10z"/><path d="m513 898 24-5 16 2-20 3z"/></g>
          <g fill="none" stroke="#cfd2d6" stroke-width="1.300"><path d="M316 1254v81h81M309 1328h14v14h-14z"/></g>
          <text class="axis" x="328" y="1246">Y</text><text class="axis" x="413" y="1331">X</text>
        </svg>
        <div class="cube">
          <svg width="220" height="220" viewBox="0 0 220 220"><circle cx="110" cy="110" r="86" fill="none" stroke="#4a4e55" stroke-width="25"/><rect x="68" y="68" width="84" height="84" fill="#b0b1b3"/><rect x="84" y="84" width="52" height="52" fill="#a2a5ab"/>
            <text class="face" x="110" y="117">TOP</text><text class="wind" x="110" y="34">N</text><text class="wind" x="110" y="214">S</text><text class="wind" x="20" y="123">W</text><text class="wind" x="200" y="123">E</text></svg>
          <button class="wcs">WCS <svg width="14" height="9" viewBox="0 0 14 9"><path d="M1 1h12L7 8z" fill="#8f999f" stroke="#222"/></svg></button>
        </div>
        <div class="command">
          <div class="log">Opening an AutoCAD 2018 format file.
Regenerating model.
Loading Modeler DLLs.
AutoCAD menu utilities loaded.*Cancel*
Command:
Autodesk DWG.  This file is a TrustedDWG last saved by an Autodesk application or Autodesk licensed application.
Command:
Command:
Command:</div>
          <span class="vbar"></span>
          <div class="prompt"><input aria-label="Command" value=""><button aria-label="History"><i class="down"></i></button><button aria-label="Undock"><svg width="22" height="22" viewBox="0 0 22 22"><path class="lg" d="M8 5H2v15h18V5h-6M6 5v15"/><path class="lb" d="M11 4v10"/><path class="b" d="m11 0 4 5H7z"/></svg></button></div>
        </div>
      </div>
      <div class="statusbar">
        <a class="ltab on" href="#model">Model</a><button class="ladd" aria-label="New layout"><svg width="20" height="20" viewBox="0 0 20 20"><path class="lg" d="M10 1v18M1 10h18"/></svg></button><a class="ltab" href="#a3">A3</a><a class="ltab" href="#layout2">Layout2</a>
      </div>
    </div>

    <aside class="inspector">
      <div class="itabs">
        <button class="itab on" aria-label="Layers"><svg width="26" height="24" viewBox="0 0 26 24"><use href="#layers" width="23" height="23"/><circle cx="20" cy="18" r="6" fill="#e4e4e4" stroke="#3b4454"/><path class="lk" d="M20 17v4M20 14v2"/></svg></button>
        <button class="itab" aria-label="References"><svg width="28" height="26" viewBox="0 0 28 26"><path class="g" d="M1 14h10V4h9l8 6v14H1z"/><path d="M20 4v6h8z" fill="#fff" stroke="#1d2636"/><path class="lg" d="M5 5v7h3V3Q5-1 2 3v9q1 4 6 3"/></svg></button>
        <button class="itab" aria-label="Content"><svg width="24" height="24" viewBox="0 0 24 24"><path class="g" d="M0 1h24v22H0z"/><path d="M5 8h3v3H5zM10 8h3v3h-3zM15 8h3v3h-3zM5 14h3v3H5zM10 14h3v3h-3zM15 14h3v3h-3zM0 4h24v1H0z" fill="#333"/></svg></button>
        <span class="ifill"></span>
        <button class="iend" aria-label="Collapse"><svg width="12" height="10" viewBox="0 0 12 10"><path d="m1 1 4 4-4 4M7 1l4 4-4 4" fill="none" stroke="#a9adb5" stroke-width="1.400"/></svg></button>
      </div>
      <div class="ihead"><h2>Layers</h2><button aria-label="Undock"><svg width="22" height="22"><use href="#dock-in"/></svg></button></div>
      <div class="ltools">
        <button><svg viewBox="0 0 26 26"><path class="b" d="M7 6h18l-7 7H1z"/><circle cx="13" cy="6" r="5" class="g"/><path class="g" d="M4 14l-3 3h17l7-6h-4l-4 4H4zM4 20l-3 4h17l7-6h-4l-4 3z"/></svg></button>
        <button><svg viewBox="0 0 26 26"><use href="#layers"/><path class="y" d="m12 18 5-4 6 8-4 4z"/><path class="w" d="m17 15 7 0 2 6-4 3z"/></svg></button>
        <button><svg viewBox="0 0 26 26"><use href="#layers" x="3" y="3" width="23" height="23"/><path d="M0 6l8-6v4q8 0 11 7-5-3-11-2v4z" fill="#8fc6f8" stroke="#1d2636" stroke-width=".7"/></svg></button>
        <button><svg viewBox="0 0 26 26"><use href="#layers"/><path class="b" d="M4 15l-3 4h15l5-5h-4l-3 2z"/><path class="lw" d="m25 16-8 8"/><path class="w" d="M13 26v-8l7 7z"/></svg></button>
        <button><svg viewBox="0 0 26 26"><use href="#layers"/><path class="b" d="M4 15l-3 4h15l5-5h-4l-3 2z"/><path class="lw" d="m15 25 8-8"/><path class="w" d="M26 14v8l-7-7z"/></svg></button>
        <button><svg viewBox="0 0 26 26"><use href="#sheet" x="-1"/><path class="lc" d="M13 18h13M16 12l7 12M23 12l-7 12"/><circle cx="19.500" cy="18" r="4" class="lc"/></svg></button>
        <button><svg viewBox="0 0 26 26"><use href="#sheet" x="-1"/><use href="#bulb" class="c" x="14" y="9" width="12" height="16"/></svg></button>
        <button><svg viewBox="0 0 26 26"><use href="#sheet" x="-1"/><path class="c" d="M13 15h12v10H13z"/><path class="lc" d="M16 15v-2q3-5 6 0v2"/><path class="lk" d="M19 18v4"/></svg></button>
        <button><svg viewBox="0 0 26 26"><use href="#sheet" x="-1"/><path class="y" d="M11 16h12v9H11z"/><path d="M19 16v-3q3-5 6 0v3" fill="none" stroke="#f9d784" stroke-width="2"/><path class="lk" d="M17 18v4"/></svg></button>
      </div>
      <div class="sel layer-current"><span class="dot"></span>
        <svg width="12" height="16" viewBox="0 0 12 16"><path d="M0 7h12v9H0z" fill="#707b8d"/><path d="M3 7V4q3-5 6 0v3" fill="none" stroke="#707b8d" stroke-width="1.500"/></svg>
        <svg width="14" height="14" viewBox="0 0 14 14"><path d="M0 7h14M3 1l8 12M11 1 3 13" stroke="#707b8d" stroke-width="1.500"/><circle cx="7" cy="7" r="4" fill="none" stroke="#707b8d" stroke-width="1.500"/></svg>
        <span class="swatch"></span><select aria-label="Current layer"><option>0</option></select></div>
      <div class="sel layer-state"><select aria-label="Layer state"><option>Unsaved Layer State</option></select></div>
      <button class="disclose"><svg width="14" height="8" viewBox="0 0 14 8"><path d="m1 1 6 5 6-5" fill="none" stroke="#b9bdc4" stroke-width="2"/></svg>Hide Layer List</button>
      <div class="layerlist">
        <table>
          <thead><tr><th class="vis"><svg width="20" height="12" viewBox="0 0 20 12"><path class="g" d="M0 6q10-12 20 0-10 12-20 0z"/><circle cx="10" cy="6" r="3.500" fill="#e4e4e4" stroke="#2f343f" stroke-width="2"/></svg></th>
            <th class="name"><div><svg width="14" height="14" viewBox="0 0 14 14"><path class="g" d="M0 0h14v14H0z"/><path d="M12 2v10H2z" fill="#333b48"/></svg>Name<svg class="sort" width="9" height="14" viewBox="0 0 9 14"><path class="g" d="M4.500 0 9 5H0zM4.500 14 0 9h9z"/></svg></div></th><th class="rest"></th></tr></thead>
          <tbody><tr class="on"><td class="vis"><span class="dot"></span></td><td colspan="2"><span class="swatch"></span>0</td></tr>
            <tr><td class="vis"><span class="dot"></span></td><td colspan="2"><span class="swatch"></span>Defpoints</td></tr></tbody>
        </table>
      </div>
      <div class="hscroll"><span></span></div>
      <div class="lfoot">
        <button aria-label="New layer"><svg width="22" height="22" viewBox="0 0 26 26"><path class="lg" d="M9 2h14l-6 7H3z"/><path class="lg" d="M4 15h13l7-7M4 21h13l7-7"/></svg></button>
        <button aria-label="Layer settings"><svg width="26" height="26" viewBox="0 0 26 26"><path class="lg" d="M8 2h12l-5 5H3zM2 12h8M2 17h8"/><path class="lg" d="M12 13h13v12H12zM14 18h2M18 18h5M14 22h2M18 22h5"/></svg></button>
        <button aria-label="Group"><svg width="22" height="20" viewBox="0 0 28 22"><path class="g" d="M1 1h8l3 3h12v4H7L3 20H1z"/><path class="g" d="M8 10h19l-6 11H3z"/></svg></button>
        <button aria-label="Dynamic group"><svg width="22" height="20" viewBox="0 0 28 22"><path class="g" d="M1 1h8l3 3h12v4H7L3 20H1z"/><path class="g" d="M8 10h19l-6 11H3z"/><path class="lk" d="m16 9-4 6h6l-4 6"/></svg></button>
        <button class="del" aria-label="Delete"></button>
        <button aria-label="Columns"><svg width="30" height="14" viewBox="0 0 30 14"><path class="lg" d="M1 1h15v12H1zM6 1v12M11 1v12"/><path class="g" d="M21 5h9l-4 5z"/></svg></button>
      </div>
      <label class="search"><svg width="30" height="22" viewBox="0 0 30 22"><circle cx="9" cy="9" r="7.500" fill="none" stroke="#1c222b" stroke-width="2"/><path d="m14 14 6 6M21 8l4 4 4-4" fill="none" stroke="#1c222b" stroke-width="2"/></svg><input type="text" placeholder="Search for layer" aria-label="Search for layer"></label>

      <section class="props">
        <div class="phead"><h2>Properties</h2><div class="seg"><button class="on">All</button><button>My</button></div>
          <button aria-label="Edit"><svg width="22" height="22" viewBox="0 0 22 22"><path d="M1 1h15v17H1z" fill="none" stroke="#7a828f" stroke-width="2"/><path d="M4 6h9M4 10h9M4 14h5" stroke="#7a828f" stroke-width="2"/><path d="m10 21 2-6 8-6 3 4-8 7z" fill="#8d939d"/></svg></button>
          <button aria-label="Undock"><svg width="22" height="22"><use href="#dock-in"/></svg></button></div>
        <div class="sel space"><select aria-label="Object type" disabled><option>Model Space</option></select></div>
        <h3><svg width="14" height="8" viewBox="0 0 14 8"><path d="m1 1 6 5 6-5" fill="none" stroke="#252c37" stroke-width="2"/></svg>General</h3>
        <div class="row"><label for="p1">Color</label><div class="sel"><span class="swatch"></span><select id="p1"><option>ByLayer</option></select></div></div>
        <div class="row"><label for="p2">Layer</label><div class="sel"><select id="p2"><option>0</option></select></div></div>
        <div class="row"><label for="p3">Linetype</label><div class="sel"><span class="ltype"></span><select id="p3"><option>By...</option></select></div></div>
        <div class="row"><label for="p4">Linetype scale</label><input id="p4" class="field" value="1.000"></div>
        <div class="row"><label for="p5">Lineweight</label><div class="sel"><select id="p5"><option>ByLayer</option></select></div></div>
        <div class="row"><label for="p6">Transparency</label><input id="p6" class="field amount" value="0"><button class="sel check" aria-label="Transparency mode"><svg width="20" height="20" viewBox="0 0 20 20"><path class="lg" d="M1 1h18v18H1z"/><path class="lg" stroke-dasharray="2 2" d="M4 5h13M6 7h11M4 9h13M6 11h11M4 13h13M6 15h11"/></svg></button></div>
        <h3><svg width="14" height="8" viewBox="0 0 14 8"><path d="m1 1 6 5 6-5" fill="none" stroke="#252c37" stroke-width="2"/></svg>Annotation</h3>
        <div class="row"><label for="a1">Text style</label><div class="sel"><select id="a1"><option>rd</option></select></div></div>
        <div class="row wide"><label for="a2">Dimension style</label><div class="sel"><select id="a2"><option>rd</option></select></div></div>
        <div class="row mid"><label for="a3">Detail View st...</label><div class="sel"><select id="a3"><option>Imperial24</option></select></div></div>
        <div class="row mid"><label for="a4">Multileader st...</label><div class="sel"><select id="a4"><option>Standard</option></select></div></div>
        <div class="row"><label for="a5">Section View...</label><div class="sel"><select id="a5"><option>Imperial24</option></select></div></div>
        <div class="row"><label for="a6">Table style</label><div class="sel"><select id="a6"><option>Standard</option></select></div></div>
      </section>
    </aside>

    <div class="modes">
      <span class="coords">1.440, -0.425, 0.000</span>
      <button><svg viewBox="0 0 26 26"><path class="lg" d="M7 0v26M13 0v26M19 0v26M0 7h26M0 13h26M0 19h26"/></svg></button>
      <button><svg viewBox="0 0 26 26"><path class="lg thick" stroke-dasharray="3 5" d="M3 4h22M3 10h22M3 16h22M3 22h22"/></svg></button>
      <button><svg viewBox="0 0 26 26"><path class="lg" d="M1 0v25h25M1 17h8v8"/></svg></button>
      <button><svg viewBox="0 0 26 26"><path class="lg" d="M20 6a10 10 0 1 0 1 12M11 14h15M11 14 23 2"/><path class="g" d="m18 12 5 3-5 3zM25 0l-7 3 5 4z"/></svg></button>
      <button><svg viewBox="0 0 26 26"><path class="g" d="M0 2h26v2H0zM0 8h12v4H0zM14 9h12v2H14zM0 15h26v2H0zM0 20h14v6H0zM16 21h10v3H16z"/></svg></button>
      <button><svg viewBox="0 0 26 26"><path class="lg" d="M1 1h24v24H1z"/><path class="lg thick" stroke-dasharray="3 3" d="M4 6h18M7 9h16M4 12h18M7 15h16M4 18h18M7 21h16"/></svg></button>
      <button><svg viewBox="0 0 26 26"><path class="lg" d="M5 1H1v22h4M14 1h4v9"/><path class="ln" d="M7 4h6v5H7zM7 14h5v6H7z"/><path class="w" d="m14 10 12 11-6 0-3 5z"/></svg></button>
      <button><svg viewBox="0 0 26 26"><path class="lg" d="M26 24H1L20 3"/><circle cx="11" cy="14" r="2.500" class="g"/></svg></button>
      <button class="hot"><svg viewBox="0 0 26 26"><path class="lg" d="M10 4h15v20H4V11"/><path class="lg" d="M0 1h8v7H0z"/></svg></button>
      <button class="hot"><svg viewBox="0 0 26 26"><use href="#star" x="-2"/><circle cx="20" cy="6" r="5" class="w"/></svg></button>
      <button><svg viewBox="0 0 26 26"><use href="#star" x="-2"/><use href="#bolt" x="15" y="0" width="12" height="13"/></svg></button>
      <button><svg viewBox="0 0 26 26"><use href="#star"/></svg></button>
      <button class="scale">1:1<i class="down"></i></button>
      <button><svg viewBox="0 0 26 26"><path class="lg" d="M1 1h10v9H1z"/><circle cx="20" cy="10" r="5" class="lg"/><path class="lg" d="m11 15 5 9H6z"/></svg></button>
      <button><svg viewBox="0 0 26 26"><use href="#gear"/></svg></button>
    </div>
  </div>
</main>

<footer class="desktop">
  <nav class="dock" aria-label="Dock">
    <div class="dgroup g22">
      <a href="#" class="run"><svg viewBox="0 0 60 60"><g clip-path="url(#tile)"><path d="M0 0h60v60H0z" fill="#eceff4"/><path d="M33 0C27 12 25 24 25 35h8c0 9 1 17 3 25H0V0z" fill="#41a5f5"/><path d="M33 0c-6 12-8 24-8 35h9" fill="none" stroke="#c9d8ee"/></g><path d="M16 17v6M44 17v6M12 40q18 15 36 0" fill="none" stroke="#16222f" stroke-width="2.500" stroke-linecap="round"/></svg></a>
      <a href="#"><svg viewBox="0 0 60 60"><rect width="60" height="60" rx="14" fill="#e6eaec"/><rect x="10" y="10" width="11" height="11" rx="2" fill="#7ae35f"/><rect x="24.500" y="10" width="11" height="11" rx="2" fill="#f2b840"/><rect x="39" y="10" width="11" height="11" rx="2" fill="#e9943c"/><rect x="10" y="24.500" width="11" height="11" rx="2" fill="#d83427"/><rect x="24.500" y="24.500" width="11" height="11" rx="2" fill="#a3a7aa"/><rect x="39" y="24.500" width="11" height="11" rx="2" fill="#ea4966"/><rect x="10" y="39" width="11" height="11" rx="2" fill="#9a3fd0"/><rect x="24.500" y="39" width="11" height="11" rx="2" fill="#3997f2"/><rect x="39" y="39" width="11" height="11" rx="2" fill="#6fd2ae"/></svg></a>
      <a href="#"><svg viewBox="0 0 60 60"><rect width="60" height="60" rx="14" fill="url(#gWhite)"/><circle cx="30" cy="30" r="26" fill="#3d90ea"/><circle cx="30" cy="30" r="23" fill="none" stroke="#cfe4fa" stroke-width="3" stroke-dasharray=".8 1.600"/><path d="M49 15 33 33l-6-6z" fill="#e4493a"/><path d="m12 46 15-19 6 6z" fill="#f2f2f2"/></svg></a>
      <a href="#" class="run"><svg viewBox="0 0 60 60"><rect width="60" height="60" rx="14" fill="#fbfbfb"/><use href="#chrome"/></svg></a>
      <a href="#"><svg viewBox="0 0 60 60"><rect width="60" height="60" rx="14" fill="url(#gGreen)"/><ellipse cx="30" cy="29" rx="22" ry="19" fill="url(#gWhite)"/><path d="M17 41q0 6-3 8 6 0 10-5z" fill="#e8f5e6"/></svg></a>
      <a href="#"><svg viewBox="0 0 60 60"><rect width="60" height="60" rx="14" fill="url(#gBlue)"/><rect x="9" y="16" width="42" height="28" rx="2" fill="url(#gWhite)"/><path d="m10 17 16 16q4 4 8 0l16-16M10 43l14-13M50 43 36 30" fill="none" stroke="#a2a8b0" stroke-width="1.500"/></svg></a>
      <a href="#"><svg viewBox="0 0 60 60"><g clip-path="url(#tile)"><path d="M0 0h60v60H0z" fill="#f1f1f1"/><path d="M0 0h14v24L0 12zM30 0h10q2 20 20 22v26L30 22z" fill="#6cd25f"/><path d="M46 0q2 14 14 18" fill="none" stroke="#c9cad0" stroke-width="7"/><path d="M0 24 18 42v18H0z" fill="#df8fcb"/><path d="M34 60V44l20 16z" fill="#f3c63f"/><path d="M16 0h13v26H16z" fill="#2f77ea"/></g><circle cx="23" cy="38" r="15" fill="#2f77ea" stroke="#fff" stroke-width="2.500"/><path d="m23 28 7 17-7-4-7 4z" fill="#fff"/></svg></a>
      <a href="#"><svg viewBox="0 0 60 60"><rect width="60" height="60" rx="14" fill="#fcfcfc"/><g fill-opacity=".85"><rect x="22" y="4" width="16" height="26" rx="8" fill="#f09a38"/><rect x="22" y="4" width="16" height="26" rx="8" fill="#f2d33c" transform="rotate(45 30 30)"/><rect x="22" y="4" width="16" height="26" rx="8" fill="#bcd24a" transform="rotate(90 30 30)"/><rect x="22" y="4" width="16" height="26" rx="8" fill="#62bb74" transform="rotate(135 30 30)"/><rect x="22" y="4" width="16" height="26" rx="8" fill="#62a6dd" transform="rotate(180 30 30)"/><rect x="22" y="4" width="16" height="26" rx="8" fill="#8a7ac6" transform="rotate(225 30 30)"/><rect x="22" y="4" width="16" height="26" rx="8" fill="#c7719f" transform="rotate(270 30 30)"/><rect x="22" y="4" width="16" height="26" rx="8" fill="#ea5a48" transform="rotate(315 30 30)"/></g></svg></a>
      <a href="#"><svg viewBox="0 0 60 60"><rect width="60" height="60" rx="14" fill="url(#gGreen)"/><rect x="9" y="17" width="29" height="26" rx="7" fill="url(#gWhite)"/><path d="m40 28 10-9v22l-10-9z" fill="#eaf5e9"/></svg></a>
      <a href="#"><svg viewBox="0 0 60 60"><g clip-path="url(#tile)"><path d="M0 0h60v60H0z" fill="#f8f8f7"/><path d="M0 0h60v18H0z" fill="#e4604f"/></g><text class="cal-m" x="30" y="15">NOV.</text><text class="cal-d" x="30" y="51">28</text></svg></a>
      <a href="#"><svg viewBox="0 0 62 60"><path d="M56 12h5v10h-5z" fill="#c9c9c9"/><path d="M56 21h6v11h-6z" fill="#4aa7e6"/><path d="M56 32h6v10h-6z" fill="#f09a3a"/><path d="M56 42h6v11h-6z" fill="#63c95c"/><rect width="60" height="60" rx="13" fill="url(#gTan)"/><circle cx="31" cy="30" r="18" fill="none" stroke="#7d5f35" stroke-width="1.500"/><circle cx="31" cy="25" r="6.500" fill="#7d5f35"/><path d="M18 42q13-14 26 0-13 12-26 0z" fill="#7d5f35"/></svg></a>
      <a href="#"><svg viewBox="0 0 60 60"><rect width="60" height="60" rx="14" fill="#fbfbfa"/><path d="M23 15h31M23 30h31M23 45h31" stroke="#c7c7c7" stroke-width="1.500"/><g fill="#fff" stroke-width="1.500"><circle cx="12" cy="15" r="5" stroke="#3b76ec"/><circle cx="12" cy="30" r="5" stroke="#e14a3e"/><circle cx="12" cy="45" r="5" stroke="#e8983a"/></g><circle cx="12" cy="15" r="3.500" fill="#3b76ec"/><circle cx="12" cy="30" r="3.500" fill="#e14a3e"/><circle cx="12" cy="45" r="3.500" fill="#e8983a"/></svg></a>
      <a href="#" class="run"><svg viewBox="0 0 60 60"><g clip-path="url(#tile)"><path d="M0 0h60v60H0z" fill="url(#gWhite)"/><path d="M0 0h60v15H0z" fill="#f6cc45"/><path d="M0 30h60M0 45h60" stroke="#cfcfcd"/><path d="M0 17.500h60" stroke="#a9a9a9" stroke-dasharray="1 1.500"/></g></svg></a>
      <a href="#" class="run"><svg viewBox="0 0 60 60"><rect y="4" width="60" height="56" rx="13" fill="#cdb95f"/><path d="M14 0h33q13 0 13 13v24q0 8-8 12-6 5-14 5H13Q0 54 0 42V13Q0 0 14 0z" fill="url(#gPaper)"/><path d="M11 20q2-12 7-10-2 8-6 11 8 0 12-8 3 2 3 6 5-5 10-1h15M10 29h40M10 40h22" fill="none" stroke="#d4bd55" stroke-width="3"/></svg></a>
      <a href="#"><svg viewBox="0 0 60 60"><rect width="60" height="60" rx="14" fill="#fff"/><circle cx="24" cy="36" r="17" fill="#ee7b55"/><rect x="20" y="7" width="33" height="32" rx="5" fill="#54b9e8" fill-opacity=".9"/><path d="M11 40c2-9 7-20 11-17s-4 13-2 15 8-14 12-14-2 11 1 13 7-8 10-8 2 6 10-3" fill="none" stroke="#17375e" stroke-width="3.500"/></svg></a>
      <a href="#"><svg viewBox="0 0 60 60"><rect width="60" height="60" rx="14" fill="#161c1b"/><path d="M18 24q2-1 4-1 3 0 5 3-4 3 0 8-2 5-5 5-3-1-6 0-4 0-7-8-1-8 5-8 2 0 4 1zM17 22q0-4 4-5 0 4-4 5z" fill="#fff"/><text class="tv" x="40" y="40">tv</text></svg></a>
      <a href="#"><svg viewBox="0 0 60 60"><rect width="60" height="60" rx="14" fill="url(#gRed)"/><path d="M22 43V15l20-5v29" fill="none" stroke="#fff" stroke-width="3"/><path d="M22 15l20-5v6l-20 5z" fill="#fff"/><ellipse cx="17" cy="44" rx="6" ry="5" fill="#fff"/><ellipse cx="37" cy="40" rx="6" ry="5" fill="#fff"/></svg></a>
      <a href="#"><svg viewBox="0 0 60 60"><rect width="60" height="60" rx="14" fill="url(#gSky)"/><path d="M16 8h28l4 16q0 3-3 3H15q-3 0-3-3z" fill="#f5f5f5"/><circle cx="30" cy="15" r="6" fill="#e0503f"/><path d="M30 15V9a6 6 0 0 1 5 9z" fill="#58b058"/><path d="M30 15 25 19a6 6 0 0 1 5-10z" fill="#3f83e8"/><path d="M28.500 27h3v22h-3zM20 49h20v3H20z" fill="#e9eef4"/></svg></a>
      <a href="#"><svg viewBox="0 0 60 60"><rect width="60" height="60" rx="14" fill="url(#gGreen)"/><g fill="#fff"><rect x="10" y="39" width="8" height="12" rx="2"/><rect x="21" y="28" width="8" height="23" rx="2"/><rect x="31" y="9" width="8" height="42" rx="2"/><rect x="42" y="20" width="7" height="31" rx="2"/></g></svg></a>
      <a href="#"><svg viewBox="0 0 60 60"><rect width="60" height="60" rx="14" fill="url(#gOrange)"/><path d="M10 51h40" stroke="#fbd9ab" stroke-width="2"/><path d="M11 50l4-10 29-28q5-3 5 2L20 44z" fill="#fff"/></svg></a>
      <a href="#"><svg viewBox="0 0 60 60"><rect width="60" height="60" rx="14" fill="url(#gSky)"/><path d="m33 13-20 34M27 13l20 34M9 37h28M42 37h9" stroke="#fff" stroke-width="4.500" stroke-linecap="round"/></svg></a>
      <a href="#"><svg viewBox="0 0 60 60"><rect width="60" height="60" rx="14" fill="url(#gGrey)"/><circle cx="30" cy="30" r="26" fill="#3e4043"/><circle cx="30" cy="30" r="24" fill="none" stroke="#a8abad" stroke-width="2" stroke-dasharray="2 1.500"/><circle cx="30" cy="30" r="18" fill="none" stroke="#a8abad" stroke-width="3"/><path d="M30 30h19M30 30 20 13M30 30 20 47" stroke="#a8abad" stroke-width="3"/><circle cx="30" cy="30" r="6" fill="#4d5053" stroke="#a8abad" stroke-width="2"/></svg></a>
    </div>
    <span class="dsep"></span>
    <div class="dgroup g3">
      <a href="#" class="run"><svg viewBox="0 0 60 60"><rect width="60" height="60" rx="14" fill="#474747"/><path d="M14 22 46 9v13L28 29l18 6v3L14 51V38l17-7-17-5z" fill="#f19b36"/></svg></a>
      <a href="#"><svg viewBox="0 0 60 60"><rect width="60" height="60" rx="14" fill="#f1f3f6"/><path d="M5 14Q5 5 14 5h32q9 0 9 9v18H5z" fill="#8fb2e8"/><path d="M5 32h50v14q0 9-9 9H14q-9 0-9-9z" fill="#34507e"/><path d="M7 50l8-9 6 7 8-5 3 10q-20 5-25-3z" fill="#e4e2dc"/><path d="M32 32q0-3 4-3h18q4 0 4 3v9H32z" fill="#1b1b1d"/><path d="M33 41h24l5 16q0 5-5 5H31q-5 0-4-5z" fill="#d6d8da" stroke="#555"/><path d="m36 45 5 6-5 7 10-2 6-8-6-4z" fill="#8b8e92"/></svg></a>
      <a href="#" class="run"><svg viewBox="0 0 60 60"><rect width="60" height="60" rx="14" fill="#fff"/><path d="M50 13l4 2v38l-41 2-1-3z" fill="#6d1226"/><path d="M8 9q0-3 3-3h37q3 0 3 3v31H8z" fill="#d02c50"/><path d="M7 9l8-3v46l-8-8z" fill="#dc5d7e"/><path d="M11 40h40v14H11z" fill="#761529"/><text class="acad" x="32" y="32" font-size="27">A</text><text class="acad" x="32" y="51" font-size="11">CAD</text></svg></a>
    </div>
    <span class="dsep"></span>
    <div class="dgroup g2">
      <a href="#"><svg class="doc" viewBox="0 0 60 72"><path d="M5 0h43v71H5z" fill="#fafafa"/><path d="M5 0h43v8H5z" fill="#d9e2f5"/><path d="M8 14h9M40 15h6M8 21h16M8 26h22M8 41h22M8 48h18M8 53h24M8 58h12" stroke="#8a8f98" stroke-width="1.200"/><path d="M8 33h9" stroke="#5a8fe0" stroke-width="2"/><rect x="38" y="47" width="22" height="22" rx="6" fill="#fff"/><use href="#chrome" x="39" y="48" width="20" height="20"/></svg></a>
      <a href="#"><svg class="doc" viewBox="0 0 60 72"><path d="M3 9h54l-7 54q-2 6-20 6t-20-6z" fill="#e3e6e9"/><ellipse cx="30" cy="9" rx="27" ry="6" fill="#cfd3d6" stroke="#f6f7f8" stroke-width="2"/><path d="M12 20l6 42" stroke="#f6f7f8" stroke-width="6"/></svg></a>
    </div>
  </nav>
  <div class="tip">Calendário</div>
</footer>
</body>
</html>
```
FILE: styles.css
```css
* { box-sizing: border-box; }
html, body { margin: 0; height: 100%; }
body {
  display: flex;
  flex-direction: column;
  overflow: hidden;
  background: #a5b0b5;
  color: #e6e8eb;
  font: 18px/24px "Open Sans", "Noto Sans", sans-serif;
}
button, input, select { font: inherit; color: inherit; border: 0; margin: 0; padding: 0; background: none; }
a { color: inherit; text-decoration: none; }
h1, h2, h3 { margin: 0; font-weight: 400; }
svg { display: block; overflow: visible; flex: none; }
.defs { position: absolute; width: 0; height: 0; }

/* icon paint */
.g { fill: #dcdcdc; }
.w { fill: #fff; }
.b { fill: #8fc6f8; }
.y { fill: #f9d784; }
.r { fill: #e8696b; }
.n { fill: #7fd494; }
.t { fill: #cfa876; }
.c { fill: #86d8e2; }
.lg, .lw, .lb, .lr, .ln, .lt, .lk, .lc { fill: none; stroke-width: 2; }
.lg { stroke: #dcdcdc; }
.lw { stroke: #fff; }
.lb { stroke: #7fbdf5; }
.lr { stroke: #de6e70; }
.ln { stroke: #7fd494; }
.lt { stroke: #d9a077; }
.lk { stroke: #2c3544; stroke-width: 1.5; }
.lc { stroke: #86d8e2; stroke-width: 1.5; }
.thin { stroke-width: 1.5; }
.thick { stroke-width: 3; }
.bk { fill: #6b7180; stroke: #dcdcdc; stroke-width: 2; }
.glyph { fill: #dcdcdc; font-family: "Liberation Sans", sans-serif; font-weight: 700; text-anchor: middle; }
.glyph.light { font-weight: 400; }
.glyph.blue { fill: #8fc6f8; }
.glyph.white { fill: #fff; font-weight: 400; }
.down { display: inline-block; width: 9px; height: 7px; background: #c9ccd1; clip-path: polygon(0 0, 100% 0, 50% 100%); }

.window {
  flex: 1;
  min-height: 0;
  display: flex;
  flex-direction: column;
  background: #3b4454;
  border-top: 1px solid #596678;
  border-radius: 0 0 14px 14px;
  overflow: hidden;
}

.titlebar { height: 41px; flex: none; display: grid; grid-template-columns: 1fr auto 1fr; }
.lights { display: flex; gap: 13px; padding: 11px 0 0 2px; }
.light { width: 19px; height: 19px; border-radius: 50%; }
.light.red { background: #ec6a5e; }
.light.amber { background: #f5bf4f; }
.light.green { background: #61c554; }
.title { display: flex; align-items: center; gap: 7px; height: 40px; padding-right: 11px; color: #a1a6af; font: 700 21px/24px "Inter", sans-serif; }
.title .file { margin-left: 14px; }
.user { justify-self: end; width: 186px; height: 33px; display: flex; align-items: center; gap: 8px; padding: 0 4px 0 8px; background: #4e5a6f; border: 1px solid #2b3340; border-width: 0 0 1px 1px; font-size: 18px; }
.user .down { margin-left: auto; }

.toolbar { height: 48px; flex: none; display: flex; gap: 50px; padding: 0 0 6px 286px; border-bottom: 1px solid #2a323e; }
.tgroup { display: flex; }
.tgroup button { width: 53px; display: grid; place-items: center; }
.tgroup svg { height: 28px; width: auto; }
.filetabs { height: 38px; flex: none; display: flex; border-bottom: 2px solid #222932; color: #a6abb4; }
.filetabs button, .ftab { border-right: 1px solid #2a323e; display: flex; align-items: center; }
.filetabs .grid { width: 29px; }
.filetabs .plus { width: 37px; justify-content: center; }
.ftab { width: 208px; padding: 0 6px 2px; }
.ftab.on { background: #4e5a6f; color: #fff; font-weight: 600; }

.work { flex: 1; min-height: 0; display: grid; grid-template-columns: 286px 1fr 373px; grid-template-rows: 1fr 37px; }

/* tool palette */
.palette { grid-row: 1 / 3; border-right: 2px solid #242c36; font-family: "Liberation Sans", sans-serif; overflow: hidden; }
.ptabs { display: flex; height: 36px; }
.ptab { width: 117px; font-size: 19px; color: #fff; }
.ptab.on { padding-right: 12px; }
.ptab:not(.on) { flex: 1; background: #32363f; color: #a0a3a9; border: 1px solid #2a303b; border-top: 0; }
.fold { width: 37px; display: grid; place-items: center; border-bottom: 1px solid #2a303b; }
.panel { position: relative; height: 116px; }
.panel:nth-of-type(even) { height: 115px; }
.panel.tall { height: 154px; }
.panel.short { height: 35px; }
.panel::after { content: ""; position: absolute; left: 0; right: 6px; bottom: 0; border-bottom: 2px solid #272e3b; }
.panel h2 { display: flex; align-items: center; height: 35px; padding-right: 8px; font-size: 16px; line-height: 20px; color: #f4f4f4; text-shadow: 0 0 1px #f4f4f4; }
.panel h2 i { width: 9px; height: 6px; margin-right: 7px; background: #f4f4f4; clip-path: polygon(0 0, 100% 0, 33% 100%, 0 66%); }
.cog { width: 16px; height: 16px; margin-left: auto; }
.tools { display: grid; grid-template-columns: repeat(8, 1fr); grid-template-rows: 35px 35px 40px; margin: 0 6px 0 -4px; }
.tools button { position: relative; display: grid; place-items: center; }
.tools svg { width: 26px; height: 26px; }
.tools .big { grid-column: span 2; grid-row: span 2; }
.tools .big svg { width: 52px; height: 52px; }
.tools .more::after { content: ""; position: absolute; right: 0; bottom: 3px; width: 7px; height: 7px; background: #a3a5a9; clip-path: polygon(100% 0, 100% 100%, 0 100%); }
.pfoot { display: flex; gap: 28px; padding: 24px 0 0 13px; }

/* model canvas */
.center { grid-column: 2; grid-row: 1 / 3; display: grid; grid-template-rows: 1fr 37px; }
.canvas { position: relative; background: #212830; min-height: 0; }
.viewlabel { display: flex; padding: 8px 22px; color: #b4b8be; font-size: 18px; line-height: 22px; font-weight: 500; }
.viewlabel button + button { border-left: 2px solid #b4b8be; margin-left: 12px; padding-left: 9px; }
.viewlabel button:first-child { padding-right: 6px; }
.drawing { position: absolute; inset: 0; width: 100%; height: 100%; }
.axis { fill: #cfd2d6; font: 300 26px "Open Sans", sans-serif; text-anchor: middle; }
.cube { position: absolute; top: 20px; right: 22px; width: 220px; }
.wind { fill: #b4b5b8; font: 700 37px "Liberation Sans", sans-serif; text-anchor: middle; }
.face { fill: #4d5560; font: 700 19px "Open Sans", sans-serif; text-anchor: middle; }
.wcs { display: flex; align-items: center; gap: 12px; margin: 33px auto 0; width: 80px; height: 20px; padding: 0 8px 0 7px; border-radius: 6px; background: #656f77; color: #0f141a; font: 16px/20px "Liberation Sans", sans-serif; }
.command { position: absolute; left: 538px; bottom: 2px; width: 738px; height: 287px; background: #3d4655; }
.log { padding: 7px 0 0 7px; width: 722px; color: #b9bdc4; font: 16px/24px "Open Sans", sans-serif; white-space: pre-wrap; }
.vbar { position: absolute; right: 9px; top: 14px; width: 6px; height: 230px; border-radius: 3px; background: #969a9f; }
.prompt { position: absolute; left: -64px; right: 0; bottom: 0; height: 38px; padding: 0 15px 0 70px; display: flex; align-items: center; gap: 20px; background: #3d4655; }
.prompt input { flex: 1; min-width: 0; }
.statusbar { display: flex; background: #363f4e; border-bottom: 2px solid #4a525e; }
.ltab, .ladd { display: grid; place-items: center; border-right: 1px solid #262d38; font-size: 17px; color: #a3a8b1; }
.ltab { width: 95px; padding-right: 4px; }
.ladd { width: 38px; }
.ltab.on { background: #4a566b; color: #fff; font-weight: 600; }

/* status toggles run beneath both canvas and inspector */
.modes { grid-column: 2 / 4; grid-row: 2; justify-self: end; position: relative; display: flex; align-items: center; height: 35px; padding-right: 1px; background: #363f4e; border-left: 1px solid #262d38; color: #b4b8be; font-size: 19px; }
.coords { padding: 0 6px 0 16px; }
.modes button { width: 34px; height: 32px; margin-right: 1px; display: grid; place-items: center; }
.modes button.hot { width: 33px; margin-right: 2px; background: #5b84bb; }
.modes svg { width: 25px; height: 25px; }
.modes button.scale { width: 44px; display: flex; align-items: center; gap: 6px; font-size: 17px; }

/* inspector */
.inspector { grid-column: 3; grid-row: 1; min-height: 0; display: flex; flex-direction: column; background: #3b4454; border-left: 1px solid #2b333f; font-size: 17px; overflow: hidden; }
.itabs { display: flex; height: 36px; flex: none; background: #2f343f; }
.itab, .iend { width: 84px; display: grid; place-items: center; border-right: 1px solid #272c36; border-bottom: 1px solid #272c36; }
.itab.on { background: #3b4454; border-bottom: 0; }
.ifill { flex: 1; border-bottom: 1px solid #272c36; }
.iend { width: 34px; background: #3b4454; border-left: 1px solid #272c36; }
.ihead { display: flex; justify-content: space-between; align-items: center; height: 26px; padding: 0 14px 0 15px; }
.ihead h2, .phead h2 { font-size: 19px; }
.ltools { display: flex; height: 69px; flex: none; padding: 8px 7px 0 15px; }
.ltools button { flex: 1; display: grid; place-items: center; }
.ltools svg { width: 25px; height: 25px; }
.sel { position: relative; display: flex; align-items: center; background: #4e5a6f; border: 1px solid #2e3a42; border-radius: 3px; color: #fff; font-weight: 500; }
.sel::after { content: ""; position: absolute; right: 7px; top: 50%; margin-top: -3px; width: 9px; height: 6px; background: #d5d7da; clip-path: polygon(0 0, 100% 0, 50% 100%); pointer-events: none; }
.sel select { appearance: none; flex: 1; min-width: 0; align-self: stretch; padding: 0 20px 0 9px; opacity: 1; }
.layer-current { height: 41px; flex: none; margin: 0 6px 0 14px; padding-left: 15px; gap: 13px; }
.layer-current select { padding-left: 6px; }
.layer-state { height: 41px; flex: none; margin: 4px 8px 0 15px; }
.dot { display: inline-block; width: 14px; height: 14px; border-radius: 50%; background: #dcdcdc; flex: none; }
.swatch { display: inline-block; width: 15px; height: 15px; background: #fff; border: 1px solid #10151c; outline: 1px solid #6a7484; flex: none; }
.disclose { display: flex; align-items: center; gap: 18px; height: 46px; flex: none; padding: 0 0 3px 21px; color: #b9bdc4; font-size: 18px; }
.layerlist { height: 252px; flex: none; margin: 0 11px 0 16px; border: 2px solid #2c333f; background: #4e5a6d; }
.layerlist table { width: 100%; border-collapse: collapse; table-layout: fixed; }
.layerlist th { height: 37px; padding: 0; text-align: left; background: #4e5a6f; border-bottom: 2px solid #2c333f; }
.layerlist th.vis, .layerlist th.rest { background: #2f343f; }
.layerlist .vis { width: 50px; padding-left: 14px; }
.layerlist th.rest { width: 9px; }
.layerlist th div { position: relative; display: flex; align-items: center; gap: 11px; height: 35px; padding: 0 12px 0 7px; color: #cdd0d5; font-weight: 700; }
.layerlist th div::after { content: ""; position: absolute; left: 50%; bottom: 0; width: 10px; height: 7px; margin-left: -6px; background: #4c8fe8; clip-path: polygon(50% 0, 100% 100%, 0 100%); }
.sort { margin-left: auto; }
.layerlist td { height: 31px; padding: 0; color: #fff; line-height: 24px; font-weight: 500; }
.layerlist td.vis { padding-left: 22px; }
.layerlist td .dot, .layerlist td .swatch { vertical-align: -2px; }
.layerlist td .swatch { margin-right: 14px; }
.layerlist tr.on { background: #919fb1; }
.hscroll { height: 26px; flex: none; margin: 0 12px 0 16px; padding: 9px 3px; }
.hscroll span { display: block; width: 176px; height: 8px; border-radius: 4px; background: #878e98; }
.lfoot { display: flex; align-items: center; gap: 24px; height: 39px; flex: none; padding: 0 20px 0 28px; }
.lfoot .del { width: 13px; height: 3px; margin-left: auto; background: #7d858f; }
.search { display: flex; align-items: center; gap: 6px; height: 33px; flex: none; margin: 0 12px 13px 16px; padding-left: 8px; border-radius: 8px; background: #fff; box-shadow: 0 0 0 1px #252c37; }
.search input { flex: 1; min-width: 0; color: #222; font-size: 20px; }
.search input::placeholder { color: #b5b5b5; opacity: 1; }
.props { flex: 1; min-height: 0; margin-bottom: 12px; overflow: hidden; border-top: 1px solid #2a323e; }
.phead { display: flex; align-items: center; height: 27px; padding: 0 12px 0 15px; }
.seg { display: flex; margin-left: auto; margin-right: 20px; border: 1px solid #2c3440; }
.seg button { width: 44px; height: 21px; color: #7e8590; font-size: 13px; line-height: 20px; }
.seg button.on { width: 48px; background: #4e5a6f; color: #fff; font-weight: 600; }
.phead > button + button { margin-left: 14px; }
.space { height: 33px; margin: 12px 12px 0 16px; background: #414b5c; border-color: #39414f; color: #7e8590; font-size: 18px; }
.space::after { background: #7e8590; }
.space select { color: #7e8590; }
.props h3 { display: flex; align-items: center; gap: 18px; height: 60px; padding: 5px 0 0 20px; font-size: 17px; font-weight: 700; color: #d5d7da; }
.props .row ~ h3 { height: 49px; padding: 0 0 8px 20px; }
.row { display: flex; align-items: center; justify-content: flex-end; height: 29px; margin: 0 15px 8px 0; }
.row label { flex: 1; padding-right: 18px; text-align: right; color: #cdd0d5; font-size: 18px; white-space: nowrap; }
.row.wide label { padding-right: 8px; }
.row.mid label { padding-right: 13px; }
.row .sel { width: 148px; height: 29px; }
.row .swatch { margin-left: 13px; }
.row .swatch + select { padding-left: 17px; }
.ltype { width: 51px; height: 2px; margin: 0 12px 0 11px; background: #e8e8e8; }
.field { width: 148px; height: 29px; padding: 0 5px; background: #4e5a6f; border: 1px solid #2e3a42; border-radius: 3px; color: #fff; font-weight: 500; }
.field.amount { width: 76px; height: 27px; margin-right: 7px; text-align: right; background: linear-gradient(#7c8695, #7c8695) 34px 12px / 2px 9px no-repeat #434e61; border-radius: 0; }
.row .check { width: 61px; padding-left: 11px; }
.row .check::after { right: 6px; }

/* desktop strip */
.desktop { position: relative; height: 112px; flex: none; padding: 2px 64px 0 56px; border-bottom: 3px solid #1b2029; background: radial-gradient(ellipse 90px 30px at 250px 112px, #2f5a52 60%, transparent 70%), linear-gradient(90deg, transparent 1130px, #e8d182 1150px, #e8d182 1350px, transparent 1380px, transparent 1830px, #e2c980 1850px, #e2c980 2100px, transparent 2120px), linear-gradient(90deg, #7e8a90 0, #a9b8bf 100px, #a9b6bf 2270px, #7f8689 2350px, #b3c2c9 2410px); }
.dock { display: flex; height: 100px; padding: 0 4px; border: 1px solid #cdd8dc; border-radius: 24px; background: radial-gradient(ellipse 200px 130px at 245px 60px, #9fb5b6 0, transparent 100%), radial-gradient(ellipse 260px 190px at 1200px 70px, #efd98a 20%, transparent 100%), radial-gradient(ellipse 280px 190px at 1920px 70px, #efd98a 30%, transparent 100%), linear-gradient(#b5c4cc, #c0ced4); box-shadow: 0 1px 6px rgba(40, 50, 60, .5); }
.dgroup { display: flex; }
.g22 { flex: 22; }
.g3 { flex: 3; }
.g2 { flex: 2; }
.dgroup a { flex: 1; position: relative; display: flex; justify-content: center; padding-top: 15px; }
.dgroup svg { width: 60px; height: 61px; filter: drop-shadow(0 1px 1px rgba(0, 0, 0, .35)); }
.dgroup svg.doc { width: 60px; height: 72px; margin-top: -5px; }
.dgroup a.run::after { content: ""; position: absolute; bottom: 3px; width: 6px; height: 6px; border-radius: 50%; background: #44504f; }
.dsep { width: 1px; margin: 12px 18px; background: #85907f; }
.cal-m { fill: #fff; font: 700 11px "Inter", sans-serif; text-anchor: middle; }
.cal-d { fill: #222; font: 400 34px "Inter", sans-serif; text-anchor: middle; }
.tv { fill: #fff; font: 600 23px "Inter", sans-serif; text-anchor: middle; }
.acad { fill: #fff; font-family: "Open Sans", sans-serif; font-weight: 700; text-anchor: middle; }
.tip { position: absolute; left: 761px; bottom: 133px; width: 154px; height: 42px; border-radius: 7px; background: #a7adb8; color: #111; font: 22px/42px "Inter", sans-serif; text-align: center; }
.tip::after { content: ""; position: absolute; left: 64px; top: 41px; width: 26px; height: 13px; background: #a7adb8; clip-path: polygon(0 0, 100% 0, 50% 100%); }
```
